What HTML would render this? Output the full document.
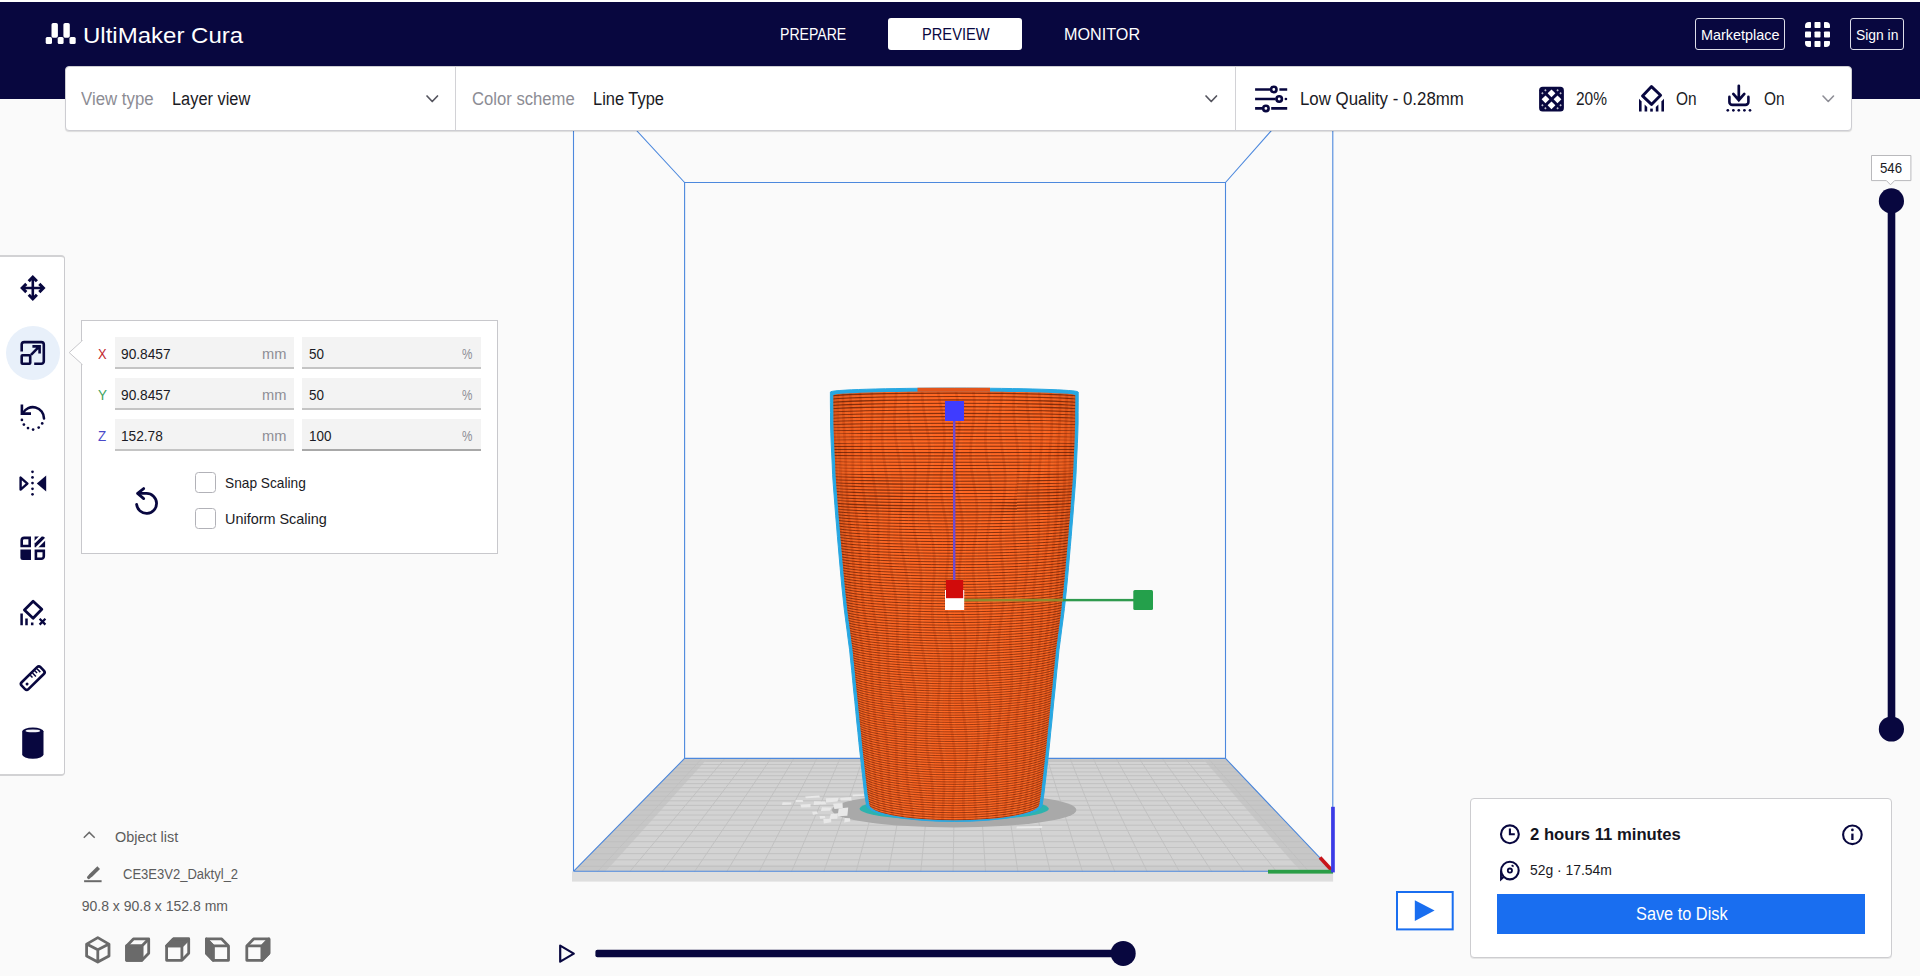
<!DOCTYPE html>
<html><head><meta charset="utf-8"><title>UltiMaker Cura</title>
<style>
*{box-sizing:border-box;margin:0;padding:0}
html,body{width:1920px;height:976px;overflow:hidden;background:#FAFAFA;font-family:"Liberation Sans",sans-serif;color:#1A1A24}
.abs{position:absolute}
.t{position:absolute;white-space:nowrap;line-height:1;transform-origin:0 0}
svg{position:absolute;overflow:visible}
</style></head><body>
<svg style="left:0;top:0" width="1920" height="976" viewBox="0 0 1920 976">
<rect x="572" y="871.3" width="761.1" height="10.3" fill="#DEDEDE"/>
<polygon points="684.6,758.4 1225.5,758.4 1332.8,871.3 573.5,871.3" fill="#D3D3D3"/>
<polygon points="573.5,871.3 605.8,871.3 707.6,758.4 684.6,758.4" fill="#C7C7C7"/>
<polygon points="1300.5,871.3 1332.8,871.3 1225.5,758.4 1202.5,758.4" fill="#C7C7C7"/>
<polygon points="704.5,761.9 1205.5,761.9 1202.5,758.4 707.6,758.4" fill="#C7C7C7"/>
<polygon points="605.8,871.3 1300.5,871.3 1294.7,864.7 611.8,864.7" fill="#CDCDCD"/>
<path d="M597.7,871.3L701.9,758.4M578.4,866.3L1328.1,866.3M630.0,871.3L724.9,758.4M584.8,859.8L1321.9,859.8M662.4,871.3L747.9,758.4M590.9,853.6L1316.0,853.6M694.7,871.3L770.9,758.4M596.9,847.5L1310.2,847.5M727.0,871.3L793.9,758.4M602.6,841.7L1304.7,841.7M759.3,871.3L816.9,758.4M608.2,836.0L1299.3,836.0M791.6,871.3L840.0,758.4M613.6,830.5L1294.0,830.5M823.9,871.3L863.0,758.4M618.9,825.2L1289.0,825.2M856.2,871.3L886.0,758.4M624.0,820.0L1284.0,820.0M888.5,871.3L909.0,758.4M628.9,815.0L1279.3,815.0M920.8,871.3L932.0,758.4M633.7,810.1L1274.6,810.1M953.1,871.3L955.0,758.4M638.4,805.4L1270.1,805.4M985.5,871.3L978.1,758.4M642.9,800.8L1265.8,800.8M1017.8,871.3L1001.1,758.4M647.3,796.3L1261.5,796.3M1050.1,871.3L1024.1,758.4M651.6,791.9L1257.4,791.9M1082.4,871.3L1047.1,758.4M655.8,787.7L1253.3,787.7M1114.7,871.3L1070.1,758.4M659.8,783.6L1249.4,783.6M1147.0,871.3L1093.2,758.4M663.8,779.6L1245.6,779.6M1179.3,871.3L1116.2,758.4M667.6,775.7L1241.9,775.7M1211.6,871.3L1139.2,758.4M671.4,771.9L1238.3,771.9M1243.9,871.3L1162.2,758.4M675.0,768.1L1234.8,768.1M1276.3,871.3L1185.2,758.4M678.6,764.5L1231.3,764.5M1308.6,871.3L1208.2,758.4M682.1,761.0L1228.0,761.0" stroke="#BFBFBF" stroke-width="0.9" fill="none"/>
<ellipse cx="954.2" cy="810" rx="122.2" ry="17.4" fill="#A9A9A9"/>
<g fill="#E8E8E8"><polygon points="782.6,802.2 791.3,802.4 791.1,804.4 782.1,805.0"/><polygon points="795.6,800.1 802.6,800.1 803.3,802.1 795.7,802.0"/><polygon points="805.3,796.4 819.2,795.6 820.0,797.5 805.7,798.3"/><polygon points="800.3,804.5 810.6,804.1 810.4,807.2 801.3,807.5"/><polygon points="814.1,801.3 825.1,801.5 826.4,804.2 813.6,804.9"/><polygon points="825.9,798.3 838.6,797.8 837.5,801.6 826.1,802.4"/><polygon points="822.0,807.3 831.5,807.4 830.3,810.8 820.8,811.0"/><polygon points="833.1,803.7 842.5,802.9 842.8,808.3 834.4,809.1"/><polygon points="838.7,808.5 848.2,807.6 847.4,815.7 837.6,816.2"/><polygon points="830.8,814.0 838.1,813.2 837.3,818.7 829.5,819.0"/><polygon points="823.3,819.1 831.1,818.7 831.3,822.2 823.8,823.4"/><polygon points="840.2,797.9 851.1,797.1 851.6,800.4 840.6,800.4"/><polygon points="852.7,794.5 871.9,793.9 870.4,795.6 852.5,796.4"/><polygon points="812.2,811.8 817.0,811.6 817.7,814.1 812.9,814.7"/><polygon points="819.5,816.1 824.9,815.9 825.3,818.3 820.2,818.8"/><polygon points="1016.8,826.5 1042.2,826.0 1042.1,828.0 1016.4,828.6"/><polygon points="844.7,818.1 850.0,818.3 850.2,821.4 844.1,822.4"/></g>
<path d="M684.6,758.4L684.6,182.5L1225.5,182.5L1225.5,758.4ZM573.5,871.3L573.5,100 M1332.8,871.3L1332.8,100 M573.5,871.3L1332.8,871.3M684.6,758.4L573.5,871.3 M1225.5,758.4L1332.8,871.3M684.6,182.5L618.0,110.4 M1225.5,182.5L1289.3,110.4" stroke="#4C88DD" stroke-width="1.1" fill="none"/>
<ellipse cx="954.2" cy="808.8" rx="94.6" ry="11.6" fill="#2DB3AE"/>
<path d="M830.4,392.0L830.4,402.3L830.5,412.6L830.5,422.9L830.8,433.2L831.2,443.6L831.7,453.9L832.2,464.2L832.6,474.5L833.3,484.8L834.1,495.1L834.9,505.4L835.7,515.8L836.6,526.1L837.4,536.4L838.3,546.7L839.2,557.0L840.1,567.3L841.0,577.6L842.0,587.9L843.1,598.2L844.2,608.6L845.5,618.9L846.9,629.2L848.2,639.5L849.6,649.8L850.6,660.1L851.7,670.4L852.7,680.8L853.7,691.1L854.8,701.4L855.8,711.7L856.8,722.0L857.9,732.3L858.9,742.6L860.0,752.9L861.2,763.2L862.3,773.6L863.5,783.9L864.7,794.2L866.4,804.5A87.9,17.0 0 0 0 1042.2,804.5L1043.9,794.2L1045.1,783.9L1046.3,773.6L1047.4,763.2L1048.6,752.9L1049.7,742.6L1050.7,732.3L1051.8,722.0L1052.8,711.7L1053.8,701.4L1054.9,691.1L1055.9,680.8L1056.9,670.4L1058.0,660.1L1059.0,649.8L1060.4,639.5L1061.7,629.2L1063.1,618.9L1064.4,608.6L1065.5,598.2L1066.6,587.9L1067.6,577.6L1068.5,567.3L1069.4,557.0L1070.3,546.7L1071.2,536.4L1072.0,526.1L1072.9,515.8L1073.7,505.4L1074.5,495.1L1075.3,484.8L1076.0,474.5L1076.4,464.2L1076.9,453.9L1077.4,443.6L1077.8,433.2L1078.1,422.9L1078.1,412.6L1078.2,402.3L1078.2,392.0L1078.2,392.0A123.9,3.9 0 0 0 830.4,392.0Z" fill="#28A7E1" stroke="#28A7E1" stroke-width="1" stroke-linejoin="round"/>
<clipPath id="cupc"><path d="M833.4,395.3L833.4,402.3L833.5,412.6L833.5,422.9L833.8,433.2L834.2,443.6L834.7,453.9L835.2,464.2L835.6,474.5L836.3,484.8L837.1,495.1L837.9,505.4L838.7,515.8L839.6,526.1L840.4,536.4L841.3,546.7L842.2,557.0L843.1,567.3L844.0,577.6L845.0,587.9L846.1,598.2L847.2,608.6L848.5,618.9L849.9,629.2L851.2,639.5L852.6,649.8L853.6,660.1L854.7,670.4L855.7,680.8L856.7,691.1L857.8,701.4L858.8,711.7L859.8,722.0L860.9,732.3L861.9,742.6L863.0,752.9L864.2,763.2L865.3,773.6L866.5,783.9L867.7,794.2L869.4,804.5A84.9,15.8 0 0 0 1039.2,804.5L1040.9,794.2L1042.1,783.9L1043.3,773.6L1044.4,763.2L1045.6,752.9L1046.7,742.6L1047.7,732.3L1048.8,722.0L1049.8,711.7L1050.8,701.4L1051.9,691.1L1052.9,680.8L1053.9,670.4L1055.0,660.1L1056.0,649.8L1057.4,639.5L1058.7,629.2L1060.1,618.9L1061.4,608.6L1062.5,598.2L1063.6,587.9L1064.6,577.6L1065.5,567.3L1066.4,557.0L1067.3,546.7L1068.2,536.4L1069.0,526.1L1069.9,515.8L1070.7,505.4L1071.5,495.1L1072.3,484.8L1073.0,474.5L1073.4,464.2L1073.9,453.9L1074.4,443.6L1074.8,433.2L1075.1,422.9L1075.1,412.6L1075.2,402.3L1075.2,392.0L1075.2,395.3A120.9,3.9 0 0 0 833.4,395.3Z"/></clipPath>
<g clip-path="url(#cupc)">
<rect x="820" y="380" width="270" height="450" fill="#FE6622"/>
<path d="M833.2,386L832.8,393L832.8,400L832.9,407L832.9,414L833.0,421L833.1,428L833.3,435L833.6,442L833.9,449L834.2,456L834.6,463L834.9,470L835.2,477L835.7,484L836.3,491L836.8,498L837.4,505L837.9,512L838.5,519L839.0,526L839.6,533L840.2,540L840.8,547L841.4,554L842.0,561L842.6,568L843.2,575L843.9,582L844.6,589L845.3,596L846.0,603L846.8,610L847.7,617L848.6,624L849.6,631L850.5,638L851.4,645L852.2,652L852.9,659L853.6,666L854.3,673L855.0,680L855.8,687L856.5,694L857.2,701L857.9,708L858.6,715L859.3,722L860.0,729L860.7,736L861.4,743L862.1,750L862.9,757L863.7,764L864.4,771L865.2,778L866.0,785L866.8,792L867.8,799L869.1,806L870.1,813L871.2,820L872.2,827L872.7,834M832.8,386L832.4,393L832.5,400L832.5,407L832.6,414L832.6,421L832.7,428L833.0,435L833.3,442L833.6,449L833.9,456L834.2,463L834.5,470L834.8,477L835.4,484L835.9,491L836.5,498L837.0,505L837.6,512L838.1,519L838.7,526L839.3,533L839.9,540L840.4,547L841.0,554L841.6,561L842.2,568L842.8,575L843.5,582L844.3,589L845.0,596L845.7,603L846.4,610L847.3,617L848.3,624L849.2,631L850.1,638L851.1,645L851.9,652L852.6,659L853.3,666L854.0,673L854.7,680L855.4,687L856.2,694L856.9,701L857.6,708L858.3,715L858.9,722L859.6,729L860.3,736L861.0,743L861.8,750L862.6,757L863.3,764L864.1,771L864.9,778L865.7,785L866.5,792L867.5,799L868.8,806L869.8,813L870.9,820L871.9,827L872.4,834M834.5,386L834.1,393L834.1,400L834.2,407L834.2,414L834.3,421L834.3,428L834.6,435L834.9,442L835.3,449L835.6,456L836.0,463L836.3,470L836.6,477L837.1,484L837.7,491L838.2,498L838.7,505L839.3,512L839.8,519L840.3,526L840.9,533L841.5,540L842.1,547L842.7,554L843.3,561L844.0,568L844.6,575L845.3,582L846.0,589L846.7,596L847.4,603L848.1,610L849.0,617L849.9,624L850.8,631L851.7,638L852.6,645L853.5,652L854.2,659L854.9,666L855.6,673L856.4,680L857.1,687L857.8,694L858.5,701L859.2,708L859.9,715L860.5,722L861.2,729L861.9,736L862.5,743L863.2,750L864.0,757L864.8,764L865.6,771L866.4,778L867.2,785L868.0,792L869.0,799L870.3,806L871.4,813L872.4,820L873.4,827L873.8,834M838.0,386L837.6,393L837.6,400L837.6,407L837.7,414L837.8,421L838.0,428L838.4,435L838.8,442L839.2,449L839.6,456L839.9,463L840.2,470L840.5,477L840.9,484L841.4,491L841.8,498L842.3,505L842.8,512L843.3,519L843.9,526L844.5,533L845.2,540L845.8,547L846.5,554L847.2,561L847.8,568L848.4,575L849.1,582L849.7,589L850.4,596L851.0,603L851.6,610L852.4,617L853.3,624L854.2,631L855.1,638L856.1,645L857.0,652L857.7,659L858.5,666L859.3,673L860.0,680L860.7,687L861.4,694L862.0,701L862.6,708L863.2,715L863.8,722L864.4,729L865.1,736L865.7,743L866.5,750L867.3,757L868.1,764L869.0,771L869.8,778L870.6,785L871.4,792L872.3,799L873.6,806L874.5,813L875.5,820L876.4,827L876.8,834M843.2,386L842.8,393L842.9,400L843.1,407L843.4,414L843.6,421L843.9,428L844.4,435L844.8,442L845.2,449L845.5,456L845.7,463L845.8,470L846.0,477L846.3,484L846.7,491L847.1,498L847.7,505L848.2,512L848.9,519L849.6,526L850.3,533L851.1,540L851.8,547L852.5,554L853.1,561L853.6,568L854.1,575L854.6,582L855.1,589L855.6,596L856.2,603L856.8,610L857.6,617L858.6,624L859.6,631L860.6,638L861.7,645L862.6,652L863.4,659L864.1,666L864.8,673L865.4,680L865.9,687L866.5,694L867.0,701L867.5,708L868.0,715L868.6,722L869.3,729L870.0,736L870.8,743L871.7,750L872.6,757L873.4,764L874.3,771L875.0,778L875.8,785L876.4,792L877.2,799L878.2,806L879.1,813L879.9,820L880.8,827L881.2,834M850.3,386L850.2,393L850.5,400L850.9,407L851.4,414L851.7,421L852.0,428L852.3,435L852.6,442L852.7,449L852.8,456L852.8,463L852.8,470L852.9,477L853.3,484L853.8,491L854.4,498L855.2,505L856.0,512L856.8,519L857.6,526L858.4,533L859.1,540L859.6,547L860.1,554L860.4,561L860.7,568L861.0,575L861.4,582L861.9,589L862.4,596L863.1,603L863.9,610L865.0,617L866.1,624L867.2,631L868.3,638L869.3,645L870.1,652L870.7,659L871.2,666L871.6,673L872.0,680L872.4,687L872.8,694L873.3,701L873.9,708L874.6,715L875.3,722L876.2,729L877.1,736L877.9,743L878.8,750L879.6,757L880.4,764L881.0,771L881.6,778L882.1,785L882.5,792L883.1,799L884.1,806L884.9,813L885.8,820L886.7,827L887.3,834M859.7,386L859.9,393L860.5,400L861.0,407L861.3,414L861.4,421L861.4,428L861.4,435L861.3,442L861.2,449L861.2,456L861.2,463L861.4,470L861.7,477L862.4,484L863.2,491L864.2,498L865.1,505L866.0,512L866.8,519L867.5,526L868.0,533L868.3,540L868.5,547L868.6,554L868.8,561L868.9,568L869.2,575L869.8,582L870.5,589L871.3,596L872.3,603L873.3,610L874.5,617L875.6,624L876.6,631L877.5,638L878.2,645L878.6,652L878.9,659L879.1,666L879.4,673L879.7,680L880.1,687L880.7,694L881.4,701L882.2,708L883.2,715L884.1,722L885.1,729L885.9,736L886.7,743L887.3,750L887.8,757L888.3,764L888.6,771L888.9,778L889.2,785L889.7,792L890.3,799L891.3,806L892.3,813L893.4,820L894.5,827L895.2,834M871.4,386L871.7,393L872.0,400L872.2,407L872.0,414L871.8,421L871.4,428L871.1,435L870.9,442L870.9,449L871.1,456L871.6,463L872.2,470L873.0,477L874.0,484L875.1,491L876.1,498L876.9,505L877.5,512L877.9,519L878.0,526L878.1,533L878.0,540L878.0,547L878.1,554L878.3,561L878.8,568L879.4,575L880.3,582L881.4,589L882.5,596L883.7,603L884.7,610L885.6,617L886.4,624L886.9,631L887.3,638L887.6,645L887.7,652L887.8,659L888.0,666L888.4,673L888.9,680L889.7,687L890.6,694L891.6,701L892.6,708L893.6,715L894.5,722L895.2,729L895.8,736L896.1,743L896.3,750L896.5,757L896.6,764L896.8,771L897.1,778L897.6,785L898.2,792L899.2,799L900.4,806L901.6,813L902.8,820L903.9,827L904.5,834M884.3,386L884.1,393L883.9,400L883.5,407L883.0,414L882.5,421L882.1,428L882.0,435L882.3,442L882.8,449L883.5,456L884.5,463L885.5,470L886.6,477L887.6,484L888.4,491L888.9,498L889.2,505L889.2,512L889.0,519L888.8,526L888.6,533L888.6,540L888.8,547L889.3,554L890.0,561L890.9,568L892.0,575L893.2,582L894.4,589L895.4,596L896.2,603L896.7,610L897.1,617L897.3,624L897.3,631L897.3,638L897.4,645L897.6,652L897.9,659L898.5,666L899.3,673L900.3,680L901.4,687L902.5,694L903.5,701L904.4,708L905.0,715L905.5,722L905.6,729L905.7,736L905.6,743L905.5,750L905.6,757L905.8,764L906.2,771L906.9,778L907.7,785L908.7,792L909.9,799L911.2,806L912.3,813L913.2,820L913.9,827L914.1,834M897.0,386L896.2,393L895.6,400L895.0,407L894.6,414L894.4,421L894.6,428L895.2,435L896.1,442L897.2,449L898.4,456L899.5,463L900.4,470L901.1,477L901.5,484L901.6,491L901.4,498L901.1,505L900.7,512L900.4,519L900.3,526L900.5,533L901.0,540L901.8,547L902.8,554L904.0,561L905.3,568L906.4,575L907.4,582L908.1,589L908.5,596L908.5,603L908.4,610L908.2,617L908.0,624L908.0,631L908.1,638L908.5,645L909.2,652L910.1,659L911.1,666L912.3,673L913.4,680L914.5,687L915.3,694L915.9,701L916.1,708L916.1,715L916.0,722L915.7,729L915.5,736L915.4,743L915.5,750L915.9,757L916.6,764L917.5,771L918.5,778L919.6,785L920.7,792L921.7,799L922.6,806L923.1,813L923.5,820L923.6,827L923.3,834M909.2,386L908.4,393L908.0,400L907.9,407L908.2,414L908.8,421L909.7,428L911.0,435L912.2,442L913.4,449L914.3,456L914.9,463L915.1,470L915.0,477L914.6,484L914.1,491L913.6,498L913.2,505L913.0,512L913.2,519L913.7,526L914.6,533L915.8,540L917.1,547L918.3,554L919.5,561L920.3,568L920.9,575L921.1,582L921.0,589L920.7,596L920.2,603L919.8,610L919.6,617L919.7,624L920.1,631L920.8,638L921.8,645L922.9,652L924.1,659L925.3,666L926.3,673L927.0,680L927.5,687L927.6,694L927.4,701L927.1,708L926.6,715L926.3,722L926.1,729L926.2,736L926.6,743L927.2,750L928.2,757L929.2,764L930.3,771L931.4,778L932.2,785L932.8,792L933.2,799L933.3,806L933.2,813L933.0,820L932.7,827L932.4,834M922.2,386L922.1,393L922.5,400L923.3,407L924.3,414L925.6,421L926.8,428L928.0,435L928.9,442L929.4,449L929.5,456L929.2,463L928.6,470L927.9,477L927.2,484L926.8,491L926.6,498L926.8,505L927.4,512L928.4,519L929.6,526L930.9,533L932.2,540L933.3,547L934.0,554L934.4,561L934.5,568L934.1,575L933.6,582L933.0,589L932.5,596L932.2,603L932.1,610L932.5,617L933.2,624L934.2,631L935.4,638L936.7,645L937.8,652L938.8,659L939.4,666L939.6,673L939.6,680L939.2,687L938.7,694L938.2,701L937.7,708L937.5,715L937.6,722L937.9,729L938.6,736L939.5,743L940.6,750L941.7,757L942.6,764L943.4,771L943.8,778L944.0,785L943.9,792L943.5,799L943.1,806L942.7,813L942.4,820L942.3,827L942.4,834M937.4,386L938.3,393L939.4,400L940.8,407L942.0,414L943.1,421L943.9,428L944.3,435L944.2,442L943.8,449L943.1,456L942.3,463L941.5,470L941.0,477L940.9,484L941.1,491L941.8,498L942.8,505L944.0,512L945.3,519L946.6,526L947.6,533L948.2,540L948.4,547L948.3,554L947.8,561L947.1,568L946.4,575L945.8,582L945.4,589L945.3,596L945.7,603L946.4,610L947.4,617L948.6,624L949.8,631L950.8,638L951.6,645L952.1,652L952.2,659L952.0,666L951.5,673L950.8,680L950.1,687L949.6,694L949.4,701L949.4,708L949.8,715L950.5,722L951.4,729L952.5,736L953.5,743L954.3,750L954.9,757L955.2,764L955.2,771L954.9,778L954.4,785L953.8,792L953.2,799L952.8,806L952.6,813L952.7,820L953.1,827L953.8,834M954.8,386L956.2,393L957.4,400L958.4,407L959.1,414L959.4,421L959.2,428L958.6,435L957.8,442L957.0,449L956.2,456L955.7,463L955.6,470L955.9,477L956.6,484L957.6,491L958.9,498L960.1,505L961.3,512L962.1,519L962.6,526L962.7,533L962.3,540L961.7,547L960.9,554L960.1,561L959.4,568L959.0,575L959.0,582L959.4,589L960.1,596L961.1,603L962.2,610L963.3,617L964.2,624L964.8,631L965.1,638L965.0,645L964.5,652L963.9,659L963.1,666L962.4,673L961.8,680L961.5,687L961.6,694L962.0,701L962.7,708L963.6,715L964.5,722L965.5,729L966.2,736L966.7,743L966.8,750L966.6,757L966.1,764L965.4,771L964.7,778L964.1,785L963.6,792L963.4,799L963.4,806L963.8,813L964.3,820L965.1,827L965.9,834M972.7,386L973.6,393L974.2,400L974.3,407L974.0,414L973.4,421L972.6,428L971.7,435L971.0,442L970.6,449L970.5,456L970.9,463L971.6,470L972.7,477L973.8,484L975.0,491L976.0,498L976.7,505L977.0,512L976.9,519L976.4,526L975.7,533L974.8,540L973.9,547L973.3,554L972.9,561L972.9,568L973.3,575L974.0,582L974.9,589L975.9,596L976.9,603L977.7,610L978.1,617L978.2,624L977.9,631L977.2,638L976.4,645L975.5,652L974.8,659L974.2,666L973.9,673L973.9,680L974.3,687L975.0,694L975.8,701L976.7,708L977.5,715L978.0,722L978.3,729L978.3,736L977.9,743L977.3,750L976.5,757L975.7,764L975.0,771L974.5,778L974.3,785L974.4,792L974.7,799L975.1,806L975.7,813L976.3,820L976.8,827L977.3,834M988.8,386L988.9,393L988.6,400L987.9,407L987.1,414L986.3,421L985.7,428L985.4,435L985.4,442L985.8,449L986.5,456L987.5,463L988.7,470L989.8,477L990.6,484L991.1,491L991.2,498L990.9,505L990.4,512L989.5,519L988.6,526L987.8,533L987.1,540L986.7,547L986.8,554L987.1,561L987.8,568L988.7,575L989.6,582L990.4,589L991.0,596L991.3,603L991.2,610L990.7,617L989.9,624L989.0,631L988.0,638L987.1,645L986.5,652L986.2,659L986.3,666L986.6,673L987.2,680L987.9,687L988.7,694L989.3,701L989.7,708L989.8,715L989.6,722L989.1,729L988.4,736L987.5,743L986.7,750L986.0,757L985.5,764L985.2,771L985.2,778L985.5,785L986.0,792L986.5,799L986.9,806L987.2,813L987.2,820L987.1,827L986.8,834M1002.4,386L1002.0,393L1001.2,400L1000.5,407L1000.0,414L999.8,421L999.9,428L1000.4,435L1001.1,442L1002.0,449L1003.0,456L1004.0,463L1004.7,470L1005.1,477L1005.0,484L1004.6,491L1004.0,498L1003.1,505L1002.2,512L1001.3,519L1000.7,526L1000.4,533L1000.4,540L1000.8,547L1001.4,554L1002.1,561L1002.9,568L1003.6,575L1003.9,582L1004.0,589L1003.8,596L1003.2,603L1002.4,610L1001.4,617L1000.4,624L999.5,631L998.8,638L998.4,645L998.4,652L998.7,659L999.2,666L999.7,673L1000.3,680L1000.7,687L1000.9,694L1000.9,701L1000.5,708L999.9,715L999.1,722L998.3,729L997.4,736L996.7,743L996.2,750L995.9,757L995.9,764L996.2,771L996.5,778L996.9,785L997.3,792L997.4,799L997.2,806L996.8,813L996.2,820L995.4,827L994.7,834M1014.5,386L1014.1,393L1013.7,400L1013.6,407L1013.8,414L1014.3,421L1015.1,428L1015.9,435L1016.8,442L1017.5,449L1018.0,456L1018.2,463L1018.2,470L1017.8,477L1017.1,484L1016.2,491L1015.3,498L1014.5,505L1013.9,512L1013.6,519L1013.7,526L1014.0,533L1014.4,540L1015.0,547L1015.6,554L1016.1,561L1016.3,568L1016.2,575L1015.9,582L1015.2,589L1014.3,596L1013.4,603L1012.5,610L1011.6,617L1010.9,624L1010.5,631L1010.3,638L1010.4,645L1010.7,652L1011.1,659L1011.5,666L1011.7,673L1011.7,680L1011.5,687L1011.0,694L1010.3,701L1009.5,708L1008.6,715L1007.8,722L1007.1,729L1006.6,736L1006.3,743L1006.3,750L1006.4,757L1006.6,764L1006.9,771L1007.0,778L1007.1,785L1006.9,792L1006.4,799L1005.5,806L1004.6,813L1003.6,820L1002.6,827L1001.9,834M1026.4,386L1026.6,393L1026.8,400L1027.3,407L1028.0,414L1028.8,421L1029.6,428L1030.1,435L1030.5,442L1030.5,449L1030.4,456L1029.9,463L1029.3,470L1028.6,477L1027.8,484L1027.0,491L1026.5,498L1026.2,505L1026.2,512L1026.4,519L1026.8,526L1027.2,533L1027.6,540L1027.8,547L1027.9,554L1027.6,561L1027.2,568L1026.5,575L1025.7,582L1024.7,589L1023.8,596L1023.1,603L1022.5,610L1022.1,617L1021.8,624L1021.8,631L1021.8,638L1021.9,645L1022.0,652L1022.0,659L1021.8,666L1021.5,673L1020.9,680L1020.1,687L1019.3,694L1018.4,701L1017.6,708L1016.9,715L1016.4,722L1016.1,729L1016.0,736L1016.1,743L1016.2,750L1016.3,757L1016.2,764L1016.1,771L1015.8,778L1015.2,785L1014.5,792L1013.6,799L1012.4,806L1011.3,813L1010.3,820L1009.5,827L1009.2,834M1038.5,386L1039.2,393L1039.8,400L1040.4,407L1041.0,414L1041.5,421L1041.9,428L1041.8,435L1041.6,442L1041.1,449L1040.5,456L1039.9,463L1039.3,470L1038.8,477L1038.3,484L1038.0,491L1037.9,498L1038.0,505L1038.2,512L1038.5,519L1038.6,526L1038.7,533L1038.5,540L1038.2,547L1037.6,554L1037.0,561L1036.2,568L1035.3,575L1034.5,582L1033.8,589L1033.2,596L1032.9,603L1032.7,610L1032.5,617L1032.3,624L1032.2,631L1032.0,638L1031.7,645L1031.2,652L1030.7,659L1030.1,666L1029.3,673L1028.4,680L1027.6,687L1026.8,694L1026.1,701L1025.6,708L1025.3,715L1025.1,722L1025.0,729L1025.0,736L1024.9,743L1024.8,750L1024.5,757L1024.0,764L1023.4,771L1022.6,778L1021.7,785L1020.9,792L1019.9,799L1018.7,806L1017.8,813L1017.1,820L1016.5,827L1016.4,834M1049.9,386L1050.7,393L1051.1,400L1051.5,407L1051.7,414L1051.7,421L1051.6,428L1051.2,435L1050.6,442L1050.0,449L1049.5,456L1049.1,463L1048.8,470L1048.7,477L1048.6,484L1048.5,491L1048.5,498L1048.6,505L1048.6,512L1048.4,519L1048.2,526L1047.7,533L1047.1,540L1046.4,547L1045.7,554L1044.9,561L1044.2,568L1043.6,575L1043.0,582L1042.6,589L1042.3,596L1042.1,603L1041.9,610L1041.6,617L1041.2,624L1040.7,631L1040.0,638L1039.3,645L1038.4,652L1037.7,659L1036.8,666L1036.0,673L1035.3,680L1034.6,687L1034.1,694L1033.7,701L1033.4,708L1033.1,715L1032.9,722L1032.7,729L1032.4,736L1032.0,743L1031.5,750L1030.8,757L1030.0,764L1029.1,771L1028.3,778L1027.4,785L1026.6,792L1025.8,799L1024.8,806L1024.1,813L1023.5,820L1022.9,827L1022.8,834M1059.4,386L1059.9,393L1060.0,400L1060.0,407L1059.9,414L1059.7,421L1059.4,428L1059.0,435L1058.5,442L1058.1,449L1057.9,456L1057.7,463L1057.7,470L1057.7,477L1057.6,484L1057.4,491L1057.2,498L1056.9,505L1056.5,512L1056.1,519L1055.5,526L1054.8,533L1054.1,540L1053.4,547L1052.7,554L1052.1,561L1051.6,568L1051.2,575L1050.9,582L1050.5,589L1050.2,596L1049.8,603L1049.4,610L1048.7,617L1048.0,624L1047.1,631L1046.2,638L1045.2,645L1044.3,652L1043.5,659L1042.8,666L1042.2,673L1041.6,680L1041.1,687L1040.7,694L1040.3,701L1040.0,708L1039.6,715L1039.1,722L1038.6,729L1038.0,736L1037.4,743L1036.6,750L1035.8,757L1034.9,764L1034.1,771L1033.3,778L1032.6,785L1031.9,792L1031.2,799L1030.3,806L1029.5,813L1028.8,820L1028.1,827L1027.8,834M1066.4,386L1066.8,393L1066.7,400L1066.5,407L1066.3,414L1066.1,421L1066.0,428L1065.7,435L1065.4,442L1065.2,449L1065.1,456L1065.0,463L1064.9,470L1064.8,477L1064.5,484L1064.1,491L1063.6,498L1063.1,505L1062.5,512L1061.9,519L1061.2,526L1060.6,533L1060.0,540L1059.4,547L1058.9,554L1058.4,561L1058.0,568L1057.6,575L1057.2,582L1056.7,589L1056.1,596L1055.5,603L1054.9,610L1054.0,617L1053.0,624L1052.1,631L1051.1,638L1050.1,645L1049.3,652L1048.6,659L1048.0,666L1047.5,673L1046.9,680L1046.4,687L1045.9,694L1045.4,701L1044.9,708L1044.3,715L1043.6,722L1042.9,729L1042.2,736L1041.5,743L1040.7,750L1039.9,757L1039.1,764L1038.4,771L1037.7,778L1037.0,785L1036.4,792L1035.7,799L1034.5,806L1033.7,813L1032.8,820L1031.8,827L1031.4,834M1071.3,386L1071.7,393L1071.6,400L1071.4,407L1071.3,414L1071.3,421L1071.2,428L1071.0,435L1070.8,442L1070.6,449L1070.4,456L1070.2,463L1069.9,470L1069.7,477L1069.2,484L1068.7,491L1068.1,498L1067.5,505L1066.9,512L1066.3,519L1065.8,526L1065.2,533L1064.6,540L1064.1,547L1063.6,554L1063.1,561L1062.6,568L1062.1,575L1061.5,582L1060.9,589L1060.2,596L1059.5,603L1058.7,610L1057.8,617L1056.8,624L1055.9,631L1054.9,638L1054.0,645L1053.3,652L1052.6,659L1052.0,666L1051.4,673L1050.8,680L1050.2,687L1049.5,694L1048.9,701L1048.2,708L1047.5,715L1046.8,722L1046.1,729L1045.3,736L1044.6,743L1043.9,750L1043.2,757L1042.4,764L1041.7,771L1041.0,778L1040.3,785L1039.6,792L1038.7,799L1037.5,806L1036.4,813L1035.4,820L1034.4,827L1033.9,834M1074.5,386L1074.9,393L1074.8,400L1074.8,407L1074.7,414L1074.7,421L1074.6,428L1074.4,435L1074.1,442L1073.8,449L1073.6,456L1073.3,463L1073.0,470L1072.6,477L1072.1,484L1071.6,491L1071.0,498L1070.4,505L1069.9,512L1069.3,519L1068.8,526L1068.2,533L1067.7,540L1067.1,547L1066.5,554L1066.0,561L1065.4,568L1064.8,575L1064.1,582L1063.4,589L1062.7,596L1061.9,603L1061.2,610L1060.3,617L1059.3,624L1058.4,631L1057.5,638L1056.6,645L1055.8,652L1055.1,659L1054.4,666L1053.8,673L1053.1,680L1052.4,687L1051.7,694L1051.0,701L1050.3,708L1049.6,715L1048.9,722L1048.2,729L1047.5,736L1046.8,743L1046.1,750L1045.3,757L1044.5,764L1043.8,771L1043.0,778L1042.2,785L1041.4,792L1040.5,799L1039.2,806L1038.1,813L1037.1,820L1036.0,827L1035.6,834M1075.9,386L1076.3,393L1076.2,400L1076.2,407L1076.1,414L1076.0,421L1076.0,428L1075.7,435L1075.4,442L1075.1,449L1074.8,456L1074.5,463L1074.2,470L1073.8,477L1073.3,484L1072.8,491L1072.2,498L1071.7,505L1071.1,512L1070.6,519L1070.0,526L1069.4,533L1068.8,540L1068.2,547L1067.6,554L1067.0,561L1066.4,568L1065.8,575L1065.2,582L1064.4,589L1063.7,596L1063.0,603L1062.3,610L1061.3,617L1060.4,624L1059.5,631L1058.5,638L1057.6,645L1056.8,652L1056.1,659L1055.4,666L1054.7,673L1053.9,680L1053.2,687L1052.5,694L1051.8,701L1051.1,708L1050.4,715L1049.7,722L1049.0,729L1048.3,736L1047.7,743L1046.9,750L1046.1,757L1045.3,764L1044.5,771L1043.7,778L1042.9,785L1042.2,792L1041.2,799L1039.9,806L1038.8,813L1037.8,820L1036.7,827L1036.3,834M1075.2,386L1075.6,393L1075.5,400L1075.5,407L1075.5,414L1075.4,421L1075.4,428L1075.1,435L1074.8,442L1074.5,449L1074.1,456L1073.8,463L1073.5,470L1073.2,477L1072.7,484L1072.1,491L1071.6,498L1071.1,505L1070.5,512L1070.0,519L1069.5,526L1068.9,533L1068.3,540L1067.7,547L1067.1,554L1066.5,561L1065.9,568L1065.3,575L1064.6,582L1063.9,589L1063.2,596L1062.5,603L1061.7,610L1060.8,617L1059.9,624L1059.0,631L1058.1,638L1057.2,645L1056.3,652L1055.6,659L1054.9,666L1054.2,673L1053.5,680L1052.8,687L1052.1,694L1051.4,701L1050.7,708L1050.0,715L1049.3,722L1048.6,729L1047.9,736L1047.2,743L1046.5,750L1045.7,757L1045.0,764L1044.2,771L1043.4,778L1042.6,785L1041.8,792L1040.8,799L1039.5,806L1038.5,813L1037.4,820L1036.4,827L1035.9,834" stroke="#8A2604" stroke-opacity="0.15" stroke-width="2.6" fill="none"/>
<path d="M833.2,386L832.8,393L832.8,400L832.9,407L832.9,414L833.0,421L833.1,428L833.3,435L833.6,442L833.9,449L834.2,456L834.6,463L834.9,470L835.2,477L835.7,484L836.3,491L836.8,498L837.4,505L837.9,512L838.5,519L839.0,526L839.6,533L840.2,540L840.8,547L841.4,554L842.0,561L842.6,568L843.2,575L843.9,582L844.6,589L845.3,596L846.0,603L846.8,610L847.7,617L848.6,624L849.6,631L850.5,638L851.4,645L852.2,652L852.9,659L853.6,666L854.3,673L855.0,680L855.8,687L856.5,694L857.2,701L857.9,708L858.6,715L859.3,722L860.0,729L860.7,736L861.4,743L862.1,750L862.9,757L863.7,764L864.4,771L865.2,778L866.0,785L866.8,792L867.8,799L869.1,806L870.1,813L871.2,820L872.2,827L872.7,834M832.8,386L832.4,393L832.5,400L832.5,407L832.6,414L832.6,421L832.7,428L833.0,435L833.3,442L833.6,449L833.9,456L834.2,463L834.5,470L834.8,477L835.4,484L835.9,491L836.5,498L837.0,505L837.6,512L838.1,519L838.7,526L839.3,533L839.9,540L840.4,547L841.0,554L841.6,561L842.2,568L842.8,575L843.5,582L844.3,589L845.0,596L845.7,603L846.4,610L847.3,617L848.3,624L849.2,631L850.1,638L851.1,645L851.9,652L852.6,659L853.3,666L854.0,673L854.7,680L855.4,687L856.2,694L856.9,701L857.6,708L858.3,715L858.9,722L859.6,729L860.3,736L861.0,743L861.8,750L862.6,757L863.3,764L864.1,771L864.9,778L865.7,785L866.5,792L867.5,799L868.8,806L869.8,813L870.9,820L871.9,827L872.4,834M834.5,386L834.1,393L834.1,400L834.2,407L834.2,414L834.3,421L834.3,428L834.6,435L834.9,442L835.3,449L835.6,456L836.0,463L836.3,470L836.6,477L837.1,484L837.7,491L838.2,498L838.7,505L839.3,512L839.8,519L840.3,526L840.9,533L841.5,540L842.1,547L842.7,554L843.3,561L844.0,568L844.6,575L845.3,582L846.0,589L846.7,596L847.4,603L848.1,610L849.0,617L849.9,624L850.8,631L851.7,638L852.6,645L853.5,652L854.2,659L854.9,666L855.6,673L856.4,680L857.1,687L857.8,694L858.5,701L859.2,708L859.9,715L860.5,722L861.2,729L861.9,736L862.5,743L863.2,750L864.0,757L864.8,764L865.6,771L866.4,778L867.2,785L868.0,792L869.0,799L870.3,806L871.4,813L872.4,820L873.4,827L873.8,834M838.0,386L837.6,393L837.6,400L837.6,407L837.7,414L837.8,421L838.0,428L838.4,435L838.8,442L839.2,449L839.6,456L839.9,463L840.2,470L840.5,477L840.9,484L841.4,491L841.8,498L842.3,505L842.8,512L843.3,519L843.9,526L844.5,533L845.2,540L845.8,547L846.5,554L847.2,561L847.8,568L848.4,575L849.1,582L849.7,589L850.4,596L851.0,603L851.6,610L852.4,617L853.3,624L854.2,631L855.1,638L856.1,645L857.0,652L857.7,659L858.5,666L859.3,673L860.0,680L860.7,687L861.4,694L862.0,701L862.6,708L863.2,715L863.8,722L864.4,729L865.1,736L865.7,743L866.5,750L867.3,757L868.1,764L869.0,771L869.8,778L870.6,785L871.4,792L872.3,799L873.6,806L874.5,813L875.5,820L876.4,827L876.8,834M843.2,386L842.8,393L842.9,400L843.1,407L843.4,414L843.6,421L843.9,428L844.4,435L844.8,442L845.2,449L845.5,456L845.7,463L845.8,470L846.0,477L846.3,484L846.7,491L847.1,498L847.7,505L848.2,512L848.9,519L849.6,526L850.3,533L851.1,540L851.8,547L852.5,554L853.1,561L853.6,568L854.1,575L854.6,582L855.1,589L855.6,596L856.2,603L856.8,610L857.6,617L858.6,624L859.6,631L860.6,638L861.7,645L862.6,652L863.4,659L864.1,666L864.8,673L865.4,680L865.9,687L866.5,694L867.0,701L867.5,708L868.0,715L868.6,722L869.3,729L870.0,736L870.8,743L871.7,750L872.6,757L873.4,764L874.3,771L875.0,778L875.8,785L876.4,792L877.2,799L878.2,806L879.1,813L879.9,820L880.8,827L881.2,834M850.3,386L850.2,393L850.5,400L850.9,407L851.4,414L851.7,421L852.0,428L852.3,435L852.6,442L852.7,449L852.8,456L852.8,463L852.8,470L852.9,477L853.3,484L853.8,491L854.4,498L855.2,505L856.0,512L856.8,519L857.6,526L858.4,533L859.1,540L859.6,547L860.1,554L860.4,561L860.7,568L861.0,575L861.4,582L861.9,589L862.4,596L863.1,603L863.9,610L865.0,617L866.1,624L867.2,631L868.3,638L869.3,645L870.1,652L870.7,659L871.2,666L871.6,673L872.0,680L872.4,687L872.8,694L873.3,701L873.9,708L874.6,715L875.3,722L876.2,729L877.1,736L877.9,743L878.8,750L879.6,757L880.4,764L881.0,771L881.6,778L882.1,785L882.5,792L883.1,799L884.1,806L884.9,813L885.8,820L886.7,827L887.3,834M859.7,386L859.9,393L860.5,400L861.0,407L861.3,414L861.4,421L861.4,428L861.4,435L861.3,442L861.2,449L861.2,456L861.2,463L861.4,470L861.7,477L862.4,484L863.2,491L864.2,498L865.1,505L866.0,512L866.8,519L867.5,526L868.0,533L868.3,540L868.5,547L868.6,554L868.8,561L868.9,568L869.2,575L869.8,582L870.5,589L871.3,596L872.3,603L873.3,610L874.5,617L875.6,624L876.6,631L877.5,638L878.2,645L878.6,652L878.9,659L879.1,666L879.4,673L879.7,680L880.1,687L880.7,694L881.4,701L882.2,708L883.2,715L884.1,722L885.1,729L885.9,736L886.7,743L887.3,750L887.8,757L888.3,764L888.6,771L888.9,778L889.2,785L889.7,792L890.3,799L891.3,806L892.3,813L893.4,820L894.5,827L895.2,834M871.4,386L871.7,393L872.0,400L872.2,407L872.0,414L871.8,421L871.4,428L871.1,435L870.9,442L870.9,449L871.1,456L871.6,463L872.2,470L873.0,477L874.0,484L875.1,491L876.1,498L876.9,505L877.5,512L877.9,519L878.0,526L878.1,533L878.0,540L878.0,547L878.1,554L878.3,561L878.8,568L879.4,575L880.3,582L881.4,589L882.5,596L883.7,603L884.7,610L885.6,617L886.4,624L886.9,631L887.3,638L887.6,645L887.7,652L887.8,659L888.0,666L888.4,673L888.9,680L889.7,687L890.6,694L891.6,701L892.6,708L893.6,715L894.5,722L895.2,729L895.8,736L896.1,743L896.3,750L896.5,757L896.6,764L896.8,771L897.1,778L897.6,785L898.2,792L899.2,799L900.4,806L901.6,813L902.8,820L903.9,827L904.5,834M884.3,386L884.1,393L883.9,400L883.5,407L883.0,414L882.5,421L882.1,428L882.0,435L882.3,442L882.8,449L883.5,456L884.5,463L885.5,470L886.6,477L887.6,484L888.4,491L888.9,498L889.2,505L889.2,512L889.0,519L888.8,526L888.6,533L888.6,540L888.8,547L889.3,554L890.0,561L890.9,568L892.0,575L893.2,582L894.4,589L895.4,596L896.2,603L896.7,610L897.1,617L897.3,624L897.3,631L897.3,638L897.4,645L897.6,652L897.9,659L898.5,666L899.3,673L900.3,680L901.4,687L902.5,694L903.5,701L904.4,708L905.0,715L905.5,722L905.6,729L905.7,736L905.6,743L905.5,750L905.6,757L905.8,764L906.2,771L906.9,778L907.7,785L908.7,792L909.9,799L911.2,806L912.3,813L913.2,820L913.9,827L914.1,834M897.0,386L896.2,393L895.6,400L895.0,407L894.6,414L894.4,421L894.6,428L895.2,435L896.1,442L897.2,449L898.4,456L899.5,463L900.4,470L901.1,477L901.5,484L901.6,491L901.4,498L901.1,505L900.7,512L900.4,519L900.3,526L900.5,533L901.0,540L901.8,547L902.8,554L904.0,561L905.3,568L906.4,575L907.4,582L908.1,589L908.5,596L908.5,603L908.4,610L908.2,617L908.0,624L908.0,631L908.1,638L908.5,645L909.2,652L910.1,659L911.1,666L912.3,673L913.4,680L914.5,687L915.3,694L915.9,701L916.1,708L916.1,715L916.0,722L915.7,729L915.5,736L915.4,743L915.5,750L915.9,757L916.6,764L917.5,771L918.5,778L919.6,785L920.7,792L921.7,799L922.6,806L923.1,813L923.5,820L923.6,827L923.3,834M909.2,386L908.4,393L908.0,400L907.9,407L908.2,414L908.8,421L909.7,428L911.0,435L912.2,442L913.4,449L914.3,456L914.9,463L915.1,470L915.0,477L914.6,484L914.1,491L913.6,498L913.2,505L913.0,512L913.2,519L913.7,526L914.6,533L915.8,540L917.1,547L918.3,554L919.5,561L920.3,568L920.9,575L921.1,582L921.0,589L920.7,596L920.2,603L919.8,610L919.6,617L919.7,624L920.1,631L920.8,638L921.8,645L922.9,652L924.1,659L925.3,666L926.3,673L927.0,680L927.5,687L927.6,694L927.4,701L927.1,708L926.6,715L926.3,722L926.1,729L926.2,736L926.6,743L927.2,750L928.2,757L929.2,764L930.3,771L931.4,778L932.2,785L932.8,792L933.2,799L933.3,806L933.2,813L933.0,820L932.7,827L932.4,834M922.2,386L922.1,393L922.5,400L923.3,407L924.3,414L925.6,421L926.8,428L928.0,435L928.9,442L929.4,449L929.5,456L929.2,463L928.6,470L927.9,477L927.2,484L926.8,491L926.6,498L926.8,505L927.4,512L928.4,519L929.6,526L930.9,533L932.2,540L933.3,547L934.0,554L934.4,561L934.5,568L934.1,575L933.6,582L933.0,589L932.5,596L932.2,603L932.1,610L932.5,617L933.2,624L934.2,631L935.4,638L936.7,645L937.8,652L938.8,659L939.4,666L939.6,673L939.6,680L939.2,687L938.7,694L938.2,701L937.7,708L937.5,715L937.6,722L937.9,729L938.6,736L939.5,743L940.6,750L941.7,757L942.6,764L943.4,771L943.8,778L944.0,785L943.9,792L943.5,799L943.1,806L942.7,813L942.4,820L942.3,827L942.4,834M937.4,386L938.3,393L939.4,400L940.8,407L942.0,414L943.1,421L943.9,428L944.3,435L944.2,442L943.8,449L943.1,456L942.3,463L941.5,470L941.0,477L940.9,484L941.1,491L941.8,498L942.8,505L944.0,512L945.3,519L946.6,526L947.6,533L948.2,540L948.4,547L948.3,554L947.8,561L947.1,568L946.4,575L945.8,582L945.4,589L945.3,596L945.7,603L946.4,610L947.4,617L948.6,624L949.8,631L950.8,638L951.6,645L952.1,652L952.2,659L952.0,666L951.5,673L950.8,680L950.1,687L949.6,694L949.4,701L949.4,708L949.8,715L950.5,722L951.4,729L952.5,736L953.5,743L954.3,750L954.9,757L955.2,764L955.2,771L954.9,778L954.4,785L953.8,792L953.2,799L952.8,806L952.6,813L952.7,820L953.1,827L953.8,834M954.8,386L956.2,393L957.4,400L958.4,407L959.1,414L959.4,421L959.2,428L958.6,435L957.8,442L957.0,449L956.2,456L955.7,463L955.6,470L955.9,477L956.6,484L957.6,491L958.9,498L960.1,505L961.3,512L962.1,519L962.6,526L962.7,533L962.3,540L961.7,547L960.9,554L960.1,561L959.4,568L959.0,575L959.0,582L959.4,589L960.1,596L961.1,603L962.2,610L963.3,617L964.2,624L964.8,631L965.1,638L965.0,645L964.5,652L963.9,659L963.1,666L962.4,673L961.8,680L961.5,687L961.6,694L962.0,701L962.7,708L963.6,715L964.5,722L965.5,729L966.2,736L966.7,743L966.8,750L966.6,757L966.1,764L965.4,771L964.7,778L964.1,785L963.6,792L963.4,799L963.4,806L963.8,813L964.3,820L965.1,827L965.9,834M972.7,386L973.6,393L974.2,400L974.3,407L974.0,414L973.4,421L972.6,428L971.7,435L971.0,442L970.6,449L970.5,456L970.9,463L971.6,470L972.7,477L973.8,484L975.0,491L976.0,498L976.7,505L977.0,512L976.9,519L976.4,526L975.7,533L974.8,540L973.9,547L973.3,554L972.9,561L972.9,568L973.3,575L974.0,582L974.9,589L975.9,596L976.9,603L977.7,610L978.1,617L978.2,624L977.9,631L977.2,638L976.4,645L975.5,652L974.8,659L974.2,666L973.9,673L973.9,680L974.3,687L975.0,694L975.8,701L976.7,708L977.5,715L978.0,722L978.3,729L978.3,736L977.9,743L977.3,750L976.5,757L975.7,764L975.0,771L974.5,778L974.3,785L974.4,792L974.7,799L975.1,806L975.7,813L976.3,820L976.8,827L977.3,834M988.8,386L988.9,393L988.6,400L987.9,407L987.1,414L986.3,421L985.7,428L985.4,435L985.4,442L985.8,449L986.5,456L987.5,463L988.7,470L989.8,477L990.6,484L991.1,491L991.2,498L990.9,505L990.4,512L989.5,519L988.6,526L987.8,533L987.1,540L986.7,547L986.8,554L987.1,561L987.8,568L988.7,575L989.6,582L990.4,589L991.0,596L991.3,603L991.2,610L990.7,617L989.9,624L989.0,631L988.0,638L987.1,645L986.5,652L986.2,659L986.3,666L986.6,673L987.2,680L987.9,687L988.7,694L989.3,701L989.7,708L989.8,715L989.6,722L989.1,729L988.4,736L987.5,743L986.7,750L986.0,757L985.5,764L985.2,771L985.2,778L985.5,785L986.0,792L986.5,799L986.9,806L987.2,813L987.2,820L987.1,827L986.8,834M1002.4,386L1002.0,393L1001.2,400L1000.5,407L1000.0,414L999.8,421L999.9,428L1000.4,435L1001.1,442L1002.0,449L1003.0,456L1004.0,463L1004.7,470L1005.1,477L1005.0,484L1004.6,491L1004.0,498L1003.1,505L1002.2,512L1001.3,519L1000.7,526L1000.4,533L1000.4,540L1000.8,547L1001.4,554L1002.1,561L1002.9,568L1003.6,575L1003.9,582L1004.0,589L1003.8,596L1003.2,603L1002.4,610L1001.4,617L1000.4,624L999.5,631L998.8,638L998.4,645L998.4,652L998.7,659L999.2,666L999.7,673L1000.3,680L1000.7,687L1000.9,694L1000.9,701L1000.5,708L999.9,715L999.1,722L998.3,729L997.4,736L996.7,743L996.2,750L995.9,757L995.9,764L996.2,771L996.5,778L996.9,785L997.3,792L997.4,799L997.2,806L996.8,813L996.2,820L995.4,827L994.7,834M1014.5,386L1014.1,393L1013.7,400L1013.6,407L1013.8,414L1014.3,421L1015.1,428L1015.9,435L1016.8,442L1017.5,449L1018.0,456L1018.2,463L1018.2,470L1017.8,477L1017.1,484L1016.2,491L1015.3,498L1014.5,505L1013.9,512L1013.6,519L1013.7,526L1014.0,533L1014.4,540L1015.0,547L1015.6,554L1016.1,561L1016.3,568L1016.2,575L1015.9,582L1015.2,589L1014.3,596L1013.4,603L1012.5,610L1011.6,617L1010.9,624L1010.5,631L1010.3,638L1010.4,645L1010.7,652L1011.1,659L1011.5,666L1011.7,673L1011.7,680L1011.5,687L1011.0,694L1010.3,701L1009.5,708L1008.6,715L1007.8,722L1007.1,729L1006.6,736L1006.3,743L1006.3,750L1006.4,757L1006.6,764L1006.9,771L1007.0,778L1007.1,785L1006.9,792L1006.4,799L1005.5,806L1004.6,813L1003.6,820L1002.6,827L1001.9,834M1026.4,386L1026.6,393L1026.8,400L1027.3,407L1028.0,414L1028.8,421L1029.6,428L1030.1,435L1030.5,442L1030.5,449L1030.4,456L1029.9,463L1029.3,470L1028.6,477L1027.8,484L1027.0,491L1026.5,498L1026.2,505L1026.2,512L1026.4,519L1026.8,526L1027.2,533L1027.6,540L1027.8,547L1027.9,554L1027.6,561L1027.2,568L1026.5,575L1025.7,582L1024.7,589L1023.8,596L1023.1,603L1022.5,610L1022.1,617L1021.8,624L1021.8,631L1021.8,638L1021.9,645L1022.0,652L1022.0,659L1021.8,666L1021.5,673L1020.9,680L1020.1,687L1019.3,694L1018.4,701L1017.6,708L1016.9,715L1016.4,722L1016.1,729L1016.0,736L1016.1,743L1016.2,750L1016.3,757L1016.2,764L1016.1,771L1015.8,778L1015.2,785L1014.5,792L1013.6,799L1012.4,806L1011.3,813L1010.3,820L1009.5,827L1009.2,834M1038.5,386L1039.2,393L1039.8,400L1040.4,407L1041.0,414L1041.5,421L1041.9,428L1041.8,435L1041.6,442L1041.1,449L1040.5,456L1039.9,463L1039.3,470L1038.8,477L1038.3,484L1038.0,491L1037.9,498L1038.0,505L1038.2,512L1038.5,519L1038.6,526L1038.7,533L1038.5,540L1038.2,547L1037.6,554L1037.0,561L1036.2,568L1035.3,575L1034.5,582L1033.8,589L1033.2,596L1032.9,603L1032.7,610L1032.5,617L1032.3,624L1032.2,631L1032.0,638L1031.7,645L1031.2,652L1030.7,659L1030.1,666L1029.3,673L1028.4,680L1027.6,687L1026.8,694L1026.1,701L1025.6,708L1025.3,715L1025.1,722L1025.0,729L1025.0,736L1024.9,743L1024.8,750L1024.5,757L1024.0,764L1023.4,771L1022.6,778L1021.7,785L1020.9,792L1019.9,799L1018.7,806L1017.8,813L1017.1,820L1016.5,827L1016.4,834M1049.9,386L1050.7,393L1051.1,400L1051.5,407L1051.7,414L1051.7,421L1051.6,428L1051.2,435L1050.6,442L1050.0,449L1049.5,456L1049.1,463L1048.8,470L1048.7,477L1048.6,484L1048.5,491L1048.5,498L1048.6,505L1048.6,512L1048.4,519L1048.2,526L1047.7,533L1047.1,540L1046.4,547L1045.7,554L1044.9,561L1044.2,568L1043.6,575L1043.0,582L1042.6,589L1042.3,596L1042.1,603L1041.9,610L1041.6,617L1041.2,624L1040.7,631L1040.0,638L1039.3,645L1038.4,652L1037.7,659L1036.8,666L1036.0,673L1035.3,680L1034.6,687L1034.1,694L1033.7,701L1033.4,708L1033.1,715L1032.9,722L1032.7,729L1032.4,736L1032.0,743L1031.5,750L1030.8,757L1030.0,764L1029.1,771L1028.3,778L1027.4,785L1026.6,792L1025.8,799L1024.8,806L1024.1,813L1023.5,820L1022.9,827L1022.8,834M1059.4,386L1059.9,393L1060.0,400L1060.0,407L1059.9,414L1059.7,421L1059.4,428L1059.0,435L1058.5,442L1058.1,449L1057.9,456L1057.7,463L1057.7,470L1057.7,477L1057.6,484L1057.4,491L1057.2,498L1056.9,505L1056.5,512L1056.1,519L1055.5,526L1054.8,533L1054.1,540L1053.4,547L1052.7,554L1052.1,561L1051.6,568L1051.2,575L1050.9,582L1050.5,589L1050.2,596L1049.8,603L1049.4,610L1048.7,617L1048.0,624L1047.1,631L1046.2,638L1045.2,645L1044.3,652L1043.5,659L1042.8,666L1042.2,673L1041.6,680L1041.1,687L1040.7,694L1040.3,701L1040.0,708L1039.6,715L1039.1,722L1038.6,729L1038.0,736L1037.4,743L1036.6,750L1035.8,757L1034.9,764L1034.1,771L1033.3,778L1032.6,785L1031.9,792L1031.2,799L1030.3,806L1029.5,813L1028.8,820L1028.1,827L1027.8,834M1066.4,386L1066.8,393L1066.7,400L1066.5,407L1066.3,414L1066.1,421L1066.0,428L1065.7,435L1065.4,442L1065.2,449L1065.1,456L1065.0,463L1064.9,470L1064.8,477L1064.5,484L1064.1,491L1063.6,498L1063.1,505L1062.5,512L1061.9,519L1061.2,526L1060.6,533L1060.0,540L1059.4,547L1058.9,554L1058.4,561L1058.0,568L1057.6,575L1057.2,582L1056.7,589L1056.1,596L1055.5,603L1054.9,610L1054.0,617L1053.0,624L1052.1,631L1051.1,638L1050.1,645L1049.3,652L1048.6,659L1048.0,666L1047.5,673L1046.9,680L1046.4,687L1045.9,694L1045.4,701L1044.9,708L1044.3,715L1043.6,722L1042.9,729L1042.2,736L1041.5,743L1040.7,750L1039.9,757L1039.1,764L1038.4,771L1037.7,778L1037.0,785L1036.4,792L1035.7,799L1034.5,806L1033.7,813L1032.8,820L1031.8,827L1031.4,834M1071.3,386L1071.7,393L1071.6,400L1071.4,407L1071.3,414L1071.3,421L1071.2,428L1071.0,435L1070.8,442L1070.6,449L1070.4,456L1070.2,463L1069.9,470L1069.7,477L1069.2,484L1068.7,491L1068.1,498L1067.5,505L1066.9,512L1066.3,519L1065.8,526L1065.2,533L1064.6,540L1064.1,547L1063.6,554L1063.1,561L1062.6,568L1062.1,575L1061.5,582L1060.9,589L1060.2,596L1059.5,603L1058.7,610L1057.8,617L1056.8,624L1055.9,631L1054.9,638L1054.0,645L1053.3,652L1052.6,659L1052.0,666L1051.4,673L1050.8,680L1050.2,687L1049.5,694L1048.9,701L1048.2,708L1047.5,715L1046.8,722L1046.1,729L1045.3,736L1044.6,743L1043.9,750L1043.2,757L1042.4,764L1041.7,771L1041.0,778L1040.3,785L1039.6,792L1038.7,799L1037.5,806L1036.4,813L1035.4,820L1034.4,827L1033.9,834M1074.5,386L1074.9,393L1074.8,400L1074.8,407L1074.7,414L1074.7,421L1074.6,428L1074.4,435L1074.1,442L1073.8,449L1073.6,456L1073.3,463L1073.0,470L1072.6,477L1072.1,484L1071.6,491L1071.0,498L1070.4,505L1069.9,512L1069.3,519L1068.8,526L1068.2,533L1067.7,540L1067.1,547L1066.5,554L1066.0,561L1065.4,568L1064.8,575L1064.1,582L1063.4,589L1062.7,596L1061.9,603L1061.2,610L1060.3,617L1059.3,624L1058.4,631L1057.5,638L1056.6,645L1055.8,652L1055.1,659L1054.4,666L1053.8,673L1053.1,680L1052.4,687L1051.7,694L1051.0,701L1050.3,708L1049.6,715L1048.9,722L1048.2,729L1047.5,736L1046.8,743L1046.1,750L1045.3,757L1044.5,764L1043.8,771L1043.0,778L1042.2,785L1041.4,792L1040.5,799L1039.2,806L1038.1,813L1037.1,820L1036.0,827L1035.6,834M1075.9,386L1076.3,393L1076.2,400L1076.2,407L1076.1,414L1076.0,421L1076.0,428L1075.7,435L1075.4,442L1075.1,449L1074.8,456L1074.5,463L1074.2,470L1073.8,477L1073.3,484L1072.8,491L1072.2,498L1071.7,505L1071.1,512L1070.6,519L1070.0,526L1069.4,533L1068.8,540L1068.2,547L1067.6,554L1067.0,561L1066.4,568L1065.8,575L1065.2,582L1064.4,589L1063.7,596L1063.0,603L1062.3,610L1061.3,617L1060.4,624L1059.5,631L1058.5,638L1057.6,645L1056.8,652L1056.1,659L1055.4,666L1054.7,673L1053.9,680L1053.2,687L1052.5,694L1051.8,701L1051.1,708L1050.4,715L1049.7,722L1049.0,729L1048.3,736L1047.7,743L1046.9,750L1046.1,757L1045.3,764L1044.5,771L1043.7,778L1042.9,785L1042.2,792L1041.2,799L1039.9,806L1038.8,813L1037.8,820L1036.7,827L1036.3,834M1075.2,386L1075.6,393L1075.5,400L1075.5,407L1075.5,414L1075.4,421L1075.4,428L1075.1,435L1074.8,442L1074.5,449L1074.1,456L1073.8,463L1073.5,470L1073.2,477L1072.7,484L1072.1,491L1071.6,498L1071.1,505L1070.5,512L1070.0,519L1069.5,526L1068.9,533L1068.3,540L1067.7,547L1067.1,554L1066.5,561L1065.9,568L1065.3,575L1064.6,582L1063.9,589L1063.2,596L1062.5,603L1061.7,610L1060.8,617L1059.9,624L1059.0,631L1058.1,638L1057.2,645L1056.3,652L1055.6,659L1054.9,666L1054.2,673L1053.5,680L1052.8,687L1052.1,694L1051.4,701L1050.7,708L1050.0,715L1049.3,722L1048.6,729L1047.9,736L1047.2,743L1046.5,750L1045.7,757L1045.0,764L1044.2,771L1043.4,778L1042.6,785L1041.8,792L1040.8,799L1039.5,806L1038.5,813L1037.4,820L1036.4,827L1035.9,834" stroke="#FF9A55" stroke-opacity="0.10" stroke-width="3" fill="none" transform="translate(3.2,0)"/>
<linearGradient id="cg" x1="0" x2="1" y1="0" y2="0"><stop offset="0" stop-color="#7A2000" stop-opacity="0.22"/><stop offset="0.12" stop-color="#7A2000" stop-opacity="0.04"/><stop offset="0.5" stop-color="#fff" stop-opacity="0.0"/><stop offset="0.88" stop-color="#7A2000" stop-opacity="0.04"/><stop offset="1" stop-color="#7A2000" stop-opacity="0.22"/></linearGradient>
<rect x="830" y="380" width="248.6" height="450" fill="url(#cg)"/>
<path d="M852.2,685.31A102.1,13.10 0 0 0 1056.4,685.31M852.4,687.62A101.9,13.20 0 0 0 1056.2,687.62M852.6,689.92A101.7,13.29 0 0 0 1056.0,689.92M852.9,692.22A101.4,13.39 0 0 0 1055.7,692.22M853.1,694.52A101.2,13.49 0 0 0 1055.5,694.52M853.3,696.82A101.0,13.58 0 0 0 1055.3,696.82M853.6,699.12A100.7,13.68 0 0 0 1055.0,699.12M853.8,701.42A100.5,13.77 0 0 0 1054.8,701.42M854.0,703.72A100.3,13.87 0 0 0 1054.6,703.72M854.2,706.02A100.1,13.96 0 0 0 1054.4,706.02M854.5,708.32A99.8,14.05 0 0 0 1054.1,708.32M854.7,710.62A99.6,14.15 0 0 0 1053.9,710.62M854.9,712.92A99.4,14.24 0 0 0 1053.7,712.92M855.2,715.22A99.1,14.33 0 0 0 1053.4,715.22M855.4,717.52A98.9,14.42 0 0 0 1053.2,717.52M855.6,719.82A98.7,14.51 0 0 0 1053.0,719.82M855.9,722.12A98.4,14.60 0 0 0 1052.7,722.12M856.1,724.42A98.2,14.69 0 0 0 1052.5,724.42M856.3,726.72A98.0,14.78 0 0 0 1052.3,726.72M856.5,729.02A97.8,14.87 0 0 0 1052.1,729.02M856.8,731.32A97.5,14.95 0 0 0 1051.8,731.32M857.0,733.62A97.3,15.04 0 0 0 1051.6,733.62M857.2,735.92A97.1,15.13 0 0 0 1051.4,735.92M857.5,738.22A96.8,15.21 0 0 0 1051.1,738.22M857.7,740.52A96.6,15.30 0 0 0 1050.9,740.52M857.9,742.82A96.4,15.38 0 0 0 1050.7,742.82M858.1,745.12A96.2,15.47 0 0 0 1050.5,745.12M858.4,747.42A95.9,15.55 0 0 0 1050.2,747.42M858.6,749.72A95.7,15.63 0 0 0 1050.0,749.72M858.9,752.02A95.4,15.70 0 0 0 1049.7,752.02M859.2,754.32A95.1,15.78 0 0 0 1049.4,754.32M859.4,756.62A94.9,15.86 0 0 0 1049.2,756.62M859.7,758.92A94.6,15.93 0 0 0 1048.9,758.92M859.9,761.22A94.4,16.01 0 0 0 1048.7,761.22M860.2,763.52A94.1,16.08 0 0 0 1048.4,763.52M860.5,765.82A93.8,16.15 0 0 0 1048.1,765.82M860.7,768.12A93.6,16.22 0 0 0 1047.9,768.12M861.0,770.42A93.3,16.30 0 0 0 1047.6,770.42M861.2,772.72A93.1,16.37 0 0 0 1047.4,772.72M861.5,775.02A92.8,16.44 0 0 0 1047.1,775.02M861.8,777.32A92.5,16.51 0 0 0 1046.8,777.32M862.0,779.62A92.3,16.58 0 0 0 1046.6,779.62M862.3,781.92A92.0,16.64 0 0 0 1046.3,781.92M862.5,784.22A91.8,16.71 0 0 0 1046.1,784.22M862.8,786.52A91.5,16.78 0 0 0 1045.8,786.52M863.1,788.82A91.2,16.85 0 0 0 1045.5,788.82M863.3,791.12A91.0,16.91 0 0 0 1045.3,791.12M863.6,793.42A90.7,16.98 0 0 0 1045.0,793.42M863.9,795.72A90.4,17.04 0 0 0 1044.7,795.72M864.2,798.02A90.1,17.09 0 0 0 1044.4,798.02M864.6,800.32A89.7,17.12 0 0 0 1044.0,800.32M865.1,802.62A89.2,17.15 0 0 0 1043.5,802.62M865.5,804.92A88.8,17.18 0 0 0 1043.1,804.92M865.9,807.22A88.4,17.21 0 0 0 1042.7,807.22M866.2,809.52A88.1,17.26 0 0 0 1042.4,809.52M866.6,811.82A87.7,17.30 0 0 0 1042.0,811.82M866.9,814.12A87.4,17.34 0 0 0 1041.7,814.12M867.3,816.42A87.0,17.38 0 0 0 1041.3,816.42M867.6,818.72A86.7,17.42 0 0 0 1041.0,818.72M868.0,821.02A86.3,17.46 0 0 0 1040.6,821.02M868.3,823.32A86.0,17.50 0 0 0 1040.3,823.32M868.6,825.62A85.7,17.54 0 0 0 1040.0,825.62M869.0,827.92A85.3,17.57 0 0 0 1039.6,827.92M869.3,830.22A85.0,17.61 0 0 0 1039.3,830.22M869.3,832.52A85.0,17.72 0 0 0 1039.3,832.52M869.3,834.82A85.0,17.83 0 0 0 1039.3,834.82" stroke="#4A1200" stroke-opacity="0.66" stroke-width="0.80" fill="none"/>
<path d="M850.3,666.59A104.0,12.28 0 0 0 1058.3,666.59M850.5,668.96A103.8,12.38 0 0 0 1058.1,668.96M850.8,671.32A103.5,12.49 0 0 0 1057.8,671.32M851.0,673.67A103.3,12.59 0 0 0 1057.6,673.67M851.2,676.01A103.1,12.70 0 0 0 1057.4,676.01M851.5,678.34A102.8,12.80 0 0 0 1057.1,678.34M851.7,680.67A102.6,12.90 0 0 0 1056.9,680.67M851.9,683.00A102.4,13.00 0 0 0 1056.7,683.00" stroke="#4A1200" stroke-opacity="0.66" stroke-width="0.82" fill="none"/>
<path d="M848.6,649.84A105.7,11.51 0 0 0 1060.0,649.84M848.8,652.26A105.5,11.63 0 0 0 1059.8,652.26M849.1,654.67A105.2,11.74 0 0 0 1059.5,654.67M849.3,657.07A105.0,11.85 0 0 0 1059.3,657.07M849.6,659.46A104.7,11.96 0 0 0 1059.0,659.46M849.8,661.84A104.5,12.07 0 0 0 1058.8,661.84M850.0,664.22A104.3,12.17 0 0 0 1058.6,664.22" stroke="#4A1200" stroke-opacity="0.66" stroke-width="0.84" fill="none"/>
<path d="M846.3,632.74A108.0,10.75 0 0 0 1062.3,632.74M846.7,635.20A107.6,10.86 0 0 0 1061.9,635.20M847.0,637.66A107.3,10.98 0 0 0 1061.6,637.66M847.3,640.11A107.0,11.08 0 0 0 1061.3,640.11M847.6,642.56A106.7,11.19 0 0 0 1061.0,642.56M848.0,644.99A106.3,11.30 0 0 0 1060.6,644.99M848.3,647.42A106.0,11.41 0 0 0 1060.3,647.42" stroke="#4A1200" stroke-opacity="0.66" stroke-width="0.86" fill="none"/>
<path d="M844.0,615.27A110.3,9.93 0 0 0 1064.6,615.27M844.3,617.79A110.0,10.06 0 0 0 1064.3,617.79M844.7,620.30A109.6,10.17 0 0 0 1063.9,620.30M845.0,622.80A109.3,10.29 0 0 0 1063.6,622.80M845.3,625.30A109.0,10.41 0 0 0 1063.3,625.30M845.7,627.78A108.6,10.53 0 0 0 1062.9,627.78M846.0,630.26A108.3,10.64 0 0 0 1062.6,630.26" stroke="#4A1200" stroke-opacity="0.66" stroke-width="0.88" fill="none"/>
<path d="M842.0,597.43A112.3,9.02 0 0 0 1066.6,597.43M842.3,600.00A112.0,9.16 0 0 0 1066.3,600.00M842.5,602.56A111.8,9.29 0 0 0 1066.1,602.56M842.8,605.12A111.5,9.43 0 0 0 1065.8,605.12M843.1,607.67A111.2,9.56 0 0 0 1065.5,607.67M843.3,610.21A111.0,9.69 0 0 0 1065.3,610.21M843.7,612.74A110.6,9.81 0 0 0 1064.9,612.74" stroke="#4A1200" stroke-opacity="0.66" stroke-width="0.90" fill="none"/>
<path d="M840.1,579.21A114.2,8.04 0 0 0 1068.5,579.21M840.4,581.83A113.9,8.18 0 0 0 1068.2,581.83M840.7,584.45A113.6,8.33 0 0 0 1067.9,584.45M840.9,587.06A113.4,8.47 0 0 0 1067.7,587.06M841.2,589.67A113.1,8.61 0 0 0 1067.4,589.67M841.5,592.26A112.8,8.75 0 0 0 1067.1,592.26M841.7,594.85A112.6,8.89 0 0 0 1066.9,594.85" stroke="#4A1200" stroke-opacity="0.66" stroke-width="0.92" fill="none"/>
<path d="M838.7,563.28A115.6,7.14 0 0 0 1069.9,563.28M839.0,565.96A115.3,7.29 0 0 0 1069.6,565.96M839.2,568.62A115.1,7.44 0 0 0 1069.4,568.62M839.4,571.28A114.9,7.59 0 0 0 1069.2,571.28M839.6,573.93A114.7,7.74 0 0 0 1069.0,573.93M839.9,576.57A114.4,7.89 0 0 0 1068.7,576.57" stroke="#4A1200" stroke-opacity="0.66" stroke-width="0.94" fill="none"/>
<path d="M837.1,544.34A117.2,6.03 0 0 0 1071.5,544.34M837.3,547.07A117.0,6.19 0 0 0 1071.3,547.07M837.6,549.79A116.7,6.35 0 0 0 1071.0,549.79M837.8,552.51A116.5,6.51 0 0 0 1070.8,552.51M838.0,555.21A116.3,6.67 0 0 0 1070.6,555.21M838.3,557.91A116.0,6.82 0 0 0 1070.3,557.91M838.5,560.60A115.8,6.98 0 0 0 1070.1,560.60" stroke="#4A1200" stroke-opacity="0.66" stroke-width="0.96" fill="none"/>
<path d="M835.7,527.78A118.6,5.03 0 0 0 1072.9,527.78M835.9,530.56A118.4,5.20 0 0 0 1072.7,530.56M836.2,533.33A118.1,5.36 0 0 0 1072.4,533.33M836.4,536.09A117.9,5.53 0 0 0 1072.2,536.09M836.6,538.85A117.7,5.70 0 0 0 1072.0,538.85M836.9,541.60A117.4,5.86 0 0 0 1071.7,541.60" stroke="#4A1200" stroke-opacity="0.66" stroke-width="0.98" fill="none"/>
<path d="M834.4,510.92A119.9,3.98 0 0 0 1074.2,510.92M834.6,513.75A119.7,4.16 0 0 0 1074.0,513.75M834.8,516.57A119.5,4.34 0 0 0 1073.8,516.57M835.0,519.39A119.3,4.51 0 0 0 1073.6,519.39M835.3,522.19A119.0,4.68 0 0 0 1073.3,522.19M835.5,524.99A118.8,4.86 0 0 0 1073.1,524.99" stroke="#4A1200" stroke-opacity="0.66" stroke-width="1.00" fill="none"/>
<path d="M833.0,493.75A121.3,2.89 0 0 0 1075.6,493.75M833.2,496.63A121.1,3.08 0 0 0 1075.4,496.63M833.5,499.51A120.8,3.26 0 0 0 1075.1,499.51M833.7,502.37A120.6,3.44 0 0 0 1074.9,502.37M833.9,505.23A120.4,3.62 0 0 0 1074.7,505.23M834.1,508.08A120.2,3.80 0 0 0 1074.5,508.08" stroke="#4A1200" stroke-opacity="0.66" stroke-width="1.02" fill="none"/>
<path d="M831.7,476.27A122.6,1.76 0 0 0 1076.9,476.27M831.9,479.21A122.4,1.95 0 0 0 1076.7,479.21M832.1,482.13A122.2,2.14 0 0 0 1076.5,482.13M832.3,485.05A122.0,2.33 0 0 0 1076.3,485.05M832.5,487.96A121.8,2.52 0 0 0 1076.1,487.96M832.8,490.86A121.5,2.71 0 0 0 1075.8,490.86" stroke="#4A1200" stroke-opacity="0.66" stroke-width="1.04" fill="none"/>
<path d="M830.9,458.47A123.4,0.57 0 0 0 1077.7,458.47M831.0,461.46A123.3,0.77 0 0 0 1077.6,461.46M831.2,464.44A123.1,0.97 0 0 0 1077.4,464.44M831.3,467.41A123.0,1.17 0 0 0 1077.3,467.41M831.4,470.37A122.9,1.36 0 0 0 1077.2,470.37M831.6,473.33A122.7,1.56 0 0 0 1077.0,473.33" stroke="#4A1200" stroke-opacity="0.66" stroke-width="1.06" fill="none"/>
<path d="M830.2,443.39A124.1,0.45 0 0 1 1078.4,443.39M830.4,446.43A123.9,0.24 0 0 1 1078.2,446.43M830.5,449.45H1078.1M830.6,452.47A123.7,0.17 0 0 0 1078.0,452.47M830.8,455.48A123.5,0.37 0 0 0 1077.8,455.48" stroke="#4A1200" stroke-opacity="0.66" stroke-width="1.08" fill="none"/>
<path d="M829.6,425.00A124.7,1.70 0 0 1 1079.0,425.00M829.6,428.09A124.7,1.49 0 0 1 1079.0,428.09M829.7,431.17A124.6,1.28 0 0 1 1078.9,431.17M829.8,434.24A124.5,1.07 0 0 1 1078.8,434.24M830.0,437.30A124.3,0.86 0 0 1 1078.6,437.30M830.1,440.35A124.2,0.65 0 0 1 1078.5,440.35" stroke="#4A1200" stroke-opacity="0.66" stroke-width="1.10" fill="none"/>
<path d="M829.4,409.41A124.9,2.76 0 0 1 1079.2,409.41M829.5,412.55A124.8,2.55 0 0 1 1079.1,412.55M829.5,415.68A124.8,2.33 0 0 1 1079.1,415.68M829.5,418.79A124.8,2.12 0 0 1 1079.1,418.79M829.5,421.90A124.8,1.91 0 0 1 1079.1,421.90" stroke="#4A1200" stroke-opacity="0.66" stroke-width="1.12" fill="none"/>
<path d="M829.4,390.40A124.9,4.06 0 0 1 1079.2,390.40M829.3,393.59A125.0,3.84 0 0 1 1079.3,393.59M829.3,396.78A125.0,3.62 0 0 1 1079.3,396.78M829.4,399.95A124.9,3.41 0 0 1 1079.2,399.95M829.4,403.11A124.9,3.19 0 0 1 1079.2,403.11M829.4,406.27A124.9,2.98 0 0 1 1079.2,406.27" stroke="#4A1200" stroke-opacity="0.66" stroke-width="1.14" fill="none"/>
<path d="M829.7,384.00A124.6,4.48 0 0 1 1078.9,384.00M829.6,387.20A124.7,4.27 0 0 1 1079.0,387.20" stroke="#4A1200" stroke-opacity="0.66" stroke-width="1.16" fill="none"/>
</g>
<path d="M917.5,387.8L990,387.8L990,391.7L917.5,391.7Z" fill="#E2541A"/>
<rect x="953" y="420" width="2.4" height="161" fill="#6E4BD0"/>
<rect x="945" y="401" width="19" height="20" fill="#3F3CFF"/>
<rect x="964" y="598.8" width="100" height="2.6" fill="#8E8B2F"/>
<rect x="1063" y="598.9" width="71" height="2.4" fill="#2F9A4E"/>
<rect x="945" y="590" width="19.2" height="20" fill="#fff"/>
<rect x="946" y="580" width="17.2" height="18.2" fill="#D10B0B"/>
<rect x="1133.3" y="590" width="19.7" height="20" rx="1.5" fill="#24A04B"/>
<path d="M1320,857.5L1331.5,870" stroke="#C8141A" stroke-width="3.6"/>
<rect x="1268" y="869.8" width="65" height="3.8" fill="#2B9E47"/>
<rect x="1331.1" y="806.8" width="3.7" height="65.6" fill="#3B3BE6"/>
</svg>
<div class="abs" style="left:0;top:0;width:1920px;height:99px;background:#08073F"></div>
<div class="abs" style="left:0;top:0;width:1920px;height:2px;background:#fff"></div>
<svg style="left:45px;top:23px" width="32" height="22" viewBox="0 0 32 22"><g fill="#fff">
<rect x="0.7" y="14.0" width="6.3" height="6.9" rx="1.5"/>
<rect x="6.5" y="0.1" width="6.4" height="14.6" rx="1.7"/>
<rect x="12.7" y="14.0" width="5.9" height="6.9" rx="1.5"/>
<rect x="18.4" y="0.1" width="6.4" height="14.6" rx="1.7"/>
<rect x="24.5" y="14.0" width="6.2" height="6.9" rx="1.5"/>
</g></svg>
<div class="t" style="left:82.80px;top:23px;font-size:22px;line-height:25px;color:#fff;transform:scaleX(1.0917);">UltiMaker Cura</div>
<div class="t" style="left:779.60px;top:25px;font-size:17px;line-height:19px;color:#fff;transform:scaleX(0.8277);">PREPARE</div>
<div class="abs" style="left:888px;top:18px;width:133.5px;height:32px;background:#fff;border-radius:3px"></div>
<div class="t" style="left:921.60px;top:25px;font-size:17px;line-height:19px;color:#08073F;transform:scaleX(0.8621);">PREVIEW</div>
<div class="t" style="left:1063.50px;top:25px;font-size:17px;line-height:19px;color:#fff;transform:scaleX(0.9514);">MONITOR</div>
<div class="abs" style="left:1695px;top:18px;width:90px;height:32px;border:1px solid #DDDDE8;border-radius:3px"></div>
<div class="t" style="left:1700.80px;top:26px;font-size:15px;line-height:17px;color:#fff;transform:scaleX(0.9619);">Marketplace</div>
<svg style="left:1805px;top:22px" width="25" height="25" viewBox="0 0 25 25"><clipPath id="gc"><rect x="0" y="0" width="25" height="25" rx="4"/></clipPath><g fill="#fff" clip-path="url(#gc)"><rect x="0.0" y="0.0" width="6" height="6" rx="0.8"/><rect x="9.5" y="0.0" width="6" height="6" rx="0.8"/><rect x="19.0" y="0.0" width="6" height="6" rx="0.8"/><rect x="0.0" y="9.5" width="6" height="6" rx="0.8"/><rect x="9.5" y="9.5" width="6" height="6" rx="0.8"/><rect x="19.0" y="9.5" width="6" height="6" rx="0.8"/><rect x="0.0" y="19.0" width="6" height="6" rx="0.8"/><rect x="9.5" y="19.0" width="6" height="6" rx="0.8"/><rect x="19.0" y="19.0" width="6" height="6" rx="0.8"/></g></svg>
<div class="abs" style="left:1850px;top:18px;width:54px;height:32px;border:1px solid #DDDDE8;border-radius:3px"></div>
<div class="t" style="left:1855.60px;top:26px;font-size:15px;line-height:17px;color:#fff;transform:scaleX(0.9245);">Sign in</div>
<div class="abs" style="left:65px;top:66px;width:1787px;height:65px;background:#fff;border:1px solid #CDCDD2;border-radius:4px;box-shadow:0 1px 1px rgba(0,0,0,0.12)"></div>
<div class="abs" style="left:455px;top:67px;width:1px;height:63px;background:#D2D2D6"></div>
<div class="abs" style="left:1235px;top:67px;width:1px;height:63px;background:#D2D2D6"></div>
<div class="t" style="left:81.00px;top:89px;font-size:18px;line-height:20px;color:#8C8C94;transform:scaleX(0.9342);">View type</div>
<div class="t" style="left:172.20px;top:89px;font-size:18px;line-height:20px;color:#1A1A24;transform:scaleX(0.9096);">Layer view</div>
<div class="t" style="left:471.80px;top:89px;font-size:18px;line-height:20px;color:#8C8C94;transform:scaleX(0.9247);">Color scheme</div>
<div class="t" style="left:593.00px;top:89px;font-size:18px;line-height:20px;color:#1A1A24;transform:scaleX(0.9136);">Line Type</div>
<div class="t" style="left:1299.80px;top:89px;font-size:18px;line-height:20px;color:#1A1A24;transform:scaleX(0.9357);">Low Quality - 0.28mm</div>
<div class="t" style="left:1575.60px;top:89px;font-size:18px;line-height:20px;color:#1A1A24;transform:scaleX(0.8600);">20%</div>
<div class="t" style="left:1676.00px;top:89px;font-size:18px;line-height:20px;color:#1A1A24;transform:scaleX(0.8573);">On</div>
<div class="t" style="left:1764.00px;top:89px;font-size:18px;line-height:20px;color:#1A1A24;transform:scaleX(0.8573);">On</div>
<svg style="left:424.8px;top:93.8px" width="14.5" height="9.5"><polyline points="2,2 7.25,7.5 12.5,2" fill="none" stroke="#55555F" stroke-width="1.7" stroke-linecap="round" stroke-linejoin="round"/></svg>
<svg style="left:1204.2px;top:93.8px" width="14.5" height="9.5"><polyline points="2,2 7.25,7.5 12.5,2" fill="none" stroke="#55555F" stroke-width="1.7" stroke-linecap="round" stroke-linejoin="round"/></svg>
<svg style="left:1820.8px;top:93.5px" width="14.5" height="9.5"><polyline points="2,2 7.25,7.5 12.5,2" fill="none" stroke="#8E8E96" stroke-width="1.6" stroke-linecap="round" stroke-linejoin="round"/></svg>
<div class="abs" style="left:-2px;top:255px;width:67px;height:520.6px;background:#fff;border:1px solid #CACACE;border-top:2px solid #D2D2D4;border-bottom:2px solid #D2D2D4;border-radius:0 4px 4px 0"></div>
<div class="abs" style="left:5.8px;top:326px;width:54px;height:54px;border-radius:50%;background:#E8F0FA"></div>
<svg style="left:0;top:0" width="700" height="976" viewBox="0 0 700 976"><g fill="none" stroke="#08073F" stroke-width="2.6" stroke-linejoin="miter">
<path d="M32.8,278V298M22.8,288H42.8"/><path d="M28.7,281.3L32.8,277.2L36.9,281.3M28.7,294.7L32.8,298.8L36.9,294.7M26.3,283.9L22.2,288L26.3,292.1M39.3,283.9L43.4,288L39.3,292.1" stroke-width="3"/>
<path d="M21.7,351.5V344.6a2.5,2.5 0 0 1 2.5,-2.5H41.3a2.5,2.5 0 0 1 2.5,2.5V361.2a2.5,2.5 0 0 1 -2.5,2.5H34.2"/><rect x="21.7" y="355.2" width="8.5" height="8.5" rx="0.8"/><path d="M31,354.8L39.6,346.2M32.4,346.4H39.6V353.6"/>
<path d="M22.9,413.1A11.2,11.2 0 0 1 44.0,418.4" stroke-linecap="round"/><path d="M21.9,404.4V413.6H31"/><g fill="#08073F" stroke="none"><circle cx="21.9" cy="419.9" r="1.35"/><circle cx="23.9" cy="424.6" r="1.35"/><circle cx="28" cy="428.1" r="1.35"/><circle cx="33.1" cy="429.6" r="1.35"/><circle cx="38.7" cy="427.6" r="1.35"/><circle cx="42.2" cy="423.4" r="1.35"/></g>
<path d="M20.6,477.6V489.6L27.4,483.6Z" stroke-linejoin="round" stroke-width="2.4"/><path d="M46.2,475.6V491.6L36.8,483.6Z" fill="#08073F" stroke="none"/><g fill="#08073F" stroke="none"><circle cx="32.5" cy="471.8" r="1.35"/><circle cx="32.5" cy="477.4" r="1.35"/><circle cx="32.5" cy="483.1" r="1.35"/><circle cx="32.5" cy="488.8" r="1.35"/><circle cx="32.5" cy="494.3" r="1.35"/></g>
<path d="M21.7,546V540.4a2.5,2.5 0 0 1 2.5,-2.5H29.7V546Z"/><path d="M34.6,536.6H42.6a2.5,2.5 0 0 1 2.5,2.5V547.2H34.6Z" fill="#08073F" stroke="none"/><path d="M34.2,542.6L41,535.8M36.6,547.8L45.6,538.8" stroke="#fff" stroke-width="2.1"/><path d="M20.4,549.6H31V560.1H22.9a2.5,2.5 0 0 1 -2.5,-2.5Z" fill="#08073F" stroke="none"/><path d="M35.9,550.9H43.8V556.3a2.5,2.5 0 0 1 -2.5,2.5H35.9Z"/>
<path d="M33.1,601.2L41.8,609.2L33.1,618.2L24.4,609.9Z" stroke-linejoin="round" stroke-width="2.8"/><path d="M21.6,613.6V625.2M26.5,618.6V625.2M32.2,622.6V625.2" stroke-width="2.5"/><path d="M39.6,618.8L45.4,624.6M45.4,618.8L39.6,624.6" stroke-width="2.3"/>
<g transform="rotate(-44.5 32.7 678.2)"><rect x="19.6" y="673.4" width="26.4" height="9.6" rx="2.4"/><circle cx="24.6" cy="678.4" r="1.5" fill="#08073F" stroke="none"/><path d="M33,674.4V677.6M36.2,674.4V679.2M39.4,674.4V677.6M42.4,674.4V679.2" stroke-width="1.5"/></g>
<path d="M22.2,731.2a10.65,3.6 0 0 1 21.3,0V754.6a10.65,4.1 0 0 1 -21.3,0Z" fill="#08073F" stroke="none"/><ellipse cx="32.85" cy="730.9" rx="7.4" ry="1.45" fill="#F2F2F8" stroke="none"/>
</g></svg>
<div class="abs" style="left:81px;top:320px;width:417px;height:234px;background:#fff;border:1px solid #C8C8CC"></div>
<svg style="left:66px;top:338px" width="18" height="32"><path d="M16.5,2.5L3.2,14.6L16.5,26.6" fill="#fff" stroke="#C8C8CC" stroke-width="1"/><rect x="15.6" y="3.4" width="2" height="22.4" fill="#fff"/></svg>
<div class="abs" style="left:115px;top:337.4px;width:179px;height:31.6px;background:linear-gradient(to bottom,#F3F3F3 0,#F3F3F3 30px,#C4C4C4 30px)"></div>
<div class="abs" style="left:302px;top:337.4px;width:179px;height:31.6px;background:linear-gradient(to bottom,#F3F3F3 0,#F3F3F3 30px,#C4C4C4 30px)"></div>
<div class="t" style="left:97.80px;top:346px;font-size:14px;line-height:16px;color:#C2272D;transform:scaleX(0.9203);">X</div>
<div class="t" style="left:120.60px;top:346px;font-size:14px;line-height:16px;color:#1A1A24;transform:scaleX(0.9800);">90.8457</div>
<div class="t" style="left:261.80px;top:346px;font-size:14px;line-height:16px;color:#8E8E96;transform:scaleX(1.0468);">mm</div>
<div class="t" style="left:308.60px;top:346px;font-size:14px;line-height:16px;color:#1A1A24;transform:scaleX(0.9631);">50</div>
<div class="t" style="left:462.20px;top:346px;font-size:14px;line-height:16px;color:#8E8E96;transform:scaleX(0.8347);">%</div>
<div class="abs" style="left:115px;top:378.4px;width:179px;height:31.6px;background:linear-gradient(to bottom,#F3F3F3 0,#F3F3F3 30px,#C4C4C4 30px)"></div>
<div class="abs" style="left:302px;top:378.4px;width:179px;height:31.6px;background:linear-gradient(to bottom,#F3F3F3 0,#F3F3F3 30px,#C4C4C4 30px)"></div>
<div class="t" style="left:97.60px;top:387px;font-size:14px;line-height:16px;color:#3DA35D;transform:scaleX(0.9631);">Y</div>
<div class="t" style="left:120.60px;top:387px;font-size:14px;line-height:16px;color:#1A1A24;transform:scaleX(0.9800);">90.8457</div>
<div class="t" style="left:261.80px;top:387px;font-size:14px;line-height:16px;color:#8E8E96;transform:scaleX(1.0468);">mm</div>
<div class="t" style="left:308.60px;top:387px;font-size:14px;line-height:16px;color:#1A1A24;transform:scaleX(0.9631);">50</div>
<div class="t" style="left:462.20px;top:387px;font-size:14px;line-height:16px;color:#8E8E96;transform:scaleX(0.8347);">%</div>
<div class="abs" style="left:115px;top:419.4px;width:179px;height:31.6px;background:linear-gradient(to bottom,#F3F3F3 0,#F3F3F3 30px,#C4C4C4 30px)"></div>
<div class="abs" style="left:302px;top:419.4px;width:179px;height:31.6px;background:linear-gradient(to bottom,#F3F3F3 0,#F3F3F3 30px,#A8A8A8 30px)"></div>
<div class="t" style="left:98.00px;top:428px;font-size:14px;line-height:16px;color:#4A49C8;transform:scaleX(0.9602);">Z</div>
<div class="t" style="left:120.60px;top:428px;font-size:14px;line-height:16px;color:#1A1A24;transform:scaleX(0.9765);">152.78</div>
<div class="t" style="left:261.80px;top:428px;font-size:14px;line-height:16px;color:#8E8E96;transform:scaleX(1.0468);">mm</div>
<div class="t" style="left:308.60px;top:428px;font-size:14px;line-height:16px;color:#1A1A24;transform:scaleX(0.9595);">100</div>
<div class="t" style="left:462.20px;top:428px;font-size:14px;line-height:16px;color:#8E8E96;transform:scaleX(0.8347);">%</div>
<div class="abs" style="left:195px;top:472.0px;width:21px;height:21px;background:#fff;border:1px solid #B2B2B8;border-radius:3.5px"></div>
<div class="t" style="left:224.80px;top:475px;font-size:14.5px;line-height:16px;color:#1A1A24;transform:scaleX(0.9457);">Snap Scaling</div>
<div class="abs" style="left:195px;top:508.3px;width:21px;height:21px;background:#fff;border:1px solid #B2B2B8;border-radius:3.5px"></div>
<div class="t" style="left:224.80px;top:511px;font-size:14.5px;line-height:16px;color:#1A1A24;transform:scaleX(0.9948);">Uniform Scaling</div>
<svg style="left:0;top:0" width="700" height="976"><g fill="none" stroke="#08073F" stroke-width="2.8" stroke-linecap="round" stroke-linejoin="round"><path d="M138,493.4H146.5A10,10 0 1 1 136.6,504.4"/><path d="M143.7,488.6L137.6,493.4L143.7,498.6"/></g></svg>
<svg style="left:0;top:0" width="700" height="976"><g fill="none" stroke="#6A6A6A"><path d="M83.8,837.8L89.25,832.4L94.7,837.8" stroke-width="1.5"/><path d="M90.3,875.8L98.7,867.6" stroke-width="3.8" stroke-linecap="butt"/><path d="M88.7,877.4L90.6,875.5" stroke-width="3.4" stroke-linecap="round"/><path d="M84.1,881.2H101.6" stroke-width="2"/></g>
<g fill="none" stroke="#6A6A6A" stroke-width="2.8" stroke-linejoin="round"><path d="M97.8,937.6L109,944.1V955.9L97.8,962L86.6,955.9V944.1Z M86.6,944.1L97.8,949.8L109,944.1M97.8,949.8V962"/><polygon points="126.6,945.9 141.9,945.9 141.9,960.3 126.6,960.3" fill="#6A6A6A"/><polygon points="126.6,945.9 133.4,938.9 148.7,938.9 148.7,953.3 141.9,960.3 126.6,960.3"/><path d="M126.6,945.9L141.9,945.9L148.70000000000002,938.9M141.9,945.9L141.9,960.3"/><polygon points="166.6,945.9 173.4,938.9 188.7,938.9 181.9,945.9" fill="#6A6A6A"/><polygon points="166.6,945.9 173.4,938.9 188.7,938.9 188.7,953.3 181.9,960.3 166.6,960.3"/><path d="M166.6,945.9L181.9,945.9L188.70000000000002,938.9M181.9,945.9L181.9,960.3"/><polygon points="213.2,945.9 206.4,938.9 206.4,953.3 213.2,960.3" fill="#6A6A6A"/><polygon points="228.5,945.9 221.7,938.9 206.4,938.9 206.4,953.3 213.2,960.3 228.5,960.3"/><path d="M228.50000000000003,945.9L213.20000000000002,945.9L206.4,938.9M213.20000000000002,945.9L213.20000000000002,960.3"/><polygon points="262.1,945.9 268.9,938.9 268.9,953.3 262.1,960.3" fill="#6A6A6A"/><polygon points="246.8,945.9 253.6,938.9 268.9,938.9 268.9,953.3 262.1,960.3 246.8,960.3"/><path d="M246.8,945.9L262.1,945.9L268.90000000000003,938.9M262.1,945.9L262.1,960.3"/></g></svg>
<div class="t" style="left:114.80px;top:829px;font-size:14.5px;line-height:16px;color:#5C5C5C;transform:scaleX(0.9929);">Object list</div>
<div class="t" style="left:122.90px;top:866px;font-size:14px;line-height:16px;color:#5C5C5C;transform:scaleX(0.9303);">CE3E3V2_Daktyl_2</div>
<div class="t" style="left:81.70px;top:898px;font-size:14px;line-height:16px;color:#5C5C5C;transform:scaleX(1.0000);">90.8 x 90.8 x 152.8 mm</div>
<svg style="left:1200px;top:0" width="720" height="976" viewBox="1200 0 720 976"><g fill="none" stroke="#08073F" stroke-width="2.6">
<path d="M1255.1,89.5H1270.4M1279.4,89.5H1287.2M1255.1,99H1275.6M1255.1,108.4H1262.4M1271.2,108.4H1287.2"/><circle cx="1273.8" cy="89.5" r="2.7"/><circle cx="1279.2" cy="99" r="2.7"/><circle cx="1265.9" cy="108.4" r="2.7"/><circle cx="1285.9" cy="99" r="1.35" fill="#08073F" stroke="none"/>
<rect x="1539.1" y="86.8" width="24.8" height="24.8" rx="3.6" fill="#08073F" stroke="none"/><polygon points="1551.5,89.39999999999999 1555.4,93.3 1551.5,97.2 1547.6,93.3" fill="#fff" fill-opacity="1" stroke="none"/><polygon points="1545.5,95.39999999999999 1549.4,99.3 1545.5,103.2 1541.6,99.3" fill="#fff" fill-opacity="1" stroke="none"/><polygon points="1557.5,95.39999999999999 1561.4,99.3 1557.5,103.2 1553.6,99.3" fill="#fff" fill-opacity="1" stroke="none"/><polygon points="1551.5,101.39999999999999 1555.4,105.3 1551.5,109.2 1547.6,105.3" fill="#fff" fill-opacity="1" stroke="none"/><polygon points="1545.4,89.1 1546.6000000000001,90.3 1545.4,91.5 1544.2,90.3" fill="#fff" fill-opacity="0.75" stroke="none"/><polygon points="1557.6,89.1 1558.8,90.3 1557.6,91.5 1556.3999999999999,90.3" fill="#fff" fill-opacity="0.75" stroke="none"/><polygon points="1545.4,107.1 1546.6000000000001,108.3 1545.4,109.5 1544.2,108.3" fill="#fff" fill-opacity="0.75" stroke="none"/><polygon points="1557.6,107.1 1558.8,108.3 1557.6,109.5 1556.3999999999999,108.3" fill="#fff" fill-opacity="0.75" stroke="none"/><polygon points="1542.4,92.1 1543.6000000000001,93.3 1542.4,94.5 1541.2,93.3" fill="#fff" fill-opacity="0.75" stroke="none"/><polygon points="1560.6,92.1 1561.8,93.3 1560.6,94.5 1559.3999999999999,93.3" fill="#fff" fill-opacity="0.75" stroke="none"/><polygon points="1542.4,104.1 1543.6000000000001,105.3 1542.4,106.5 1541.2,105.3" fill="#fff" fill-opacity="0.75" stroke="none"/><polygon points="1560.6,104.1 1561.8,105.3 1560.6,106.5 1559.3999999999999,105.3" fill="#fff" fill-opacity="0.75" stroke="none"/>
<path d="M1651.5,86.6L1660.6,95.2L1651.5,104.4L1642.5,95.9Z" stroke-linejoin="round" stroke-width="2.9"/><g fill="#08073F" stroke="none"><polygon points="1639,98.8 1641.6,101.6 1641.6,111.6 1639,111.6"/><polygon points="1644.6,104.6 1647.2,107 1647.2,111.6 1644.6,111.6"/><rect x="1650.2" y="108.6" width="2.6" height="3"/><polygon points="1658.4,104.6 1655.8,107 1655.8,111.6 1658.4,111.6"/><polygon points="1664,98.8 1661.4,101.6 1661.4,111.6 1664,111.6"/></g>
<path d="M1738.8,85.8V99.4M1733.3,93.9L1738.8,100.2L1744.3,93.9" stroke-width="2.7" stroke-linecap="round"/><path d="M1729.4,96.9V101.9a3,3 0 0 0 3,3H1745.4a3,3 0 0 0 3,-3V96.9" stroke-linecap="round"/><g fill="#08073F" stroke="none"><circle cx="1727.8" cy="110.3" r="1.35"/><circle cx="1733.35" cy="110.3" r="1.35"/><circle cx="1738.8" cy="110.3" r="1.35"/><circle cx="1744.4" cy="110.3" r="1.35"/><circle cx="1750" cy="110.3" r="1.35"/></g>
</g>
<rect x="1887.7" y="200" width="7.6" height="530" fill="#08073F"/><circle cx="1891.4" cy="200.9" r="12.6" fill="#08073F"/><circle cx="1891.4" cy="729" r="12.6" fill="#08073F"/>
<path d="M1871.5,155.5H1910.9V180.6H1894.6L1890.5,184.8L1886.4,180.6H1871.5Z" fill="#fff" stroke="#B9B9BC" stroke-width="1"/>
</svg>
<div class="t" style="left:1880.20px;top:160px;font-size:14px;line-height:16px;color:#1A1A24;transform:scaleX(0.9467);">546</div>
<svg style="left:0;top:0" width="1920" height="976"><rect x="595.4" y="949.7" width="528" height="7.6" rx="2" fill="#08073F"/><circle cx="1123.2" cy="953.4" r="12.5" fill="#08073F"/><path d="M560.2,945.6L573.8,953.6L560.2,961.6Z" fill="none" stroke="#08073F" stroke-width="2.2" stroke-linejoin="round"/></svg>
<div class="abs" style="left:1470px;top:798px;width:422px;height:160px;background:#fff;border:1px solid #CDCDD0;border-radius:4px;box-shadow:0 1px 0 rgba(0,0,0,0.08)"></div>
<div class="abs" style="left:1497px;top:894.2px;width:368px;height:39.6px;background:#196EF0"></div>
<div class="t" style="left:1635.60px;top:904px;font-size:17.5px;line-height:20px;color:#fff;transform:scaleX(0.9322);">Save to Disk</div>
<div class="t" style="left:1530.40px;top:825px;font-size:17px;line-height:19px;color:#14141E;font-weight:bold;transform:scaleX(0.9791);">2 hours 11 minutes</div>
<div class="t" style="left:1530.40px;top:862px;font-size:14.5px;line-height:16px;color:#1A1A24;transform:scaleX(0.9586);">52g · 17.54m</div>
<svg style="left:0;top:0" width="1920" height="976"><g fill="none" stroke="#08073F" stroke-width="2.1"><circle cx="1509.9" cy="834.3" r="8.9"/><path d="M1509.9,828.4V834.2H1514.8"/><circle cx="1509.9" cy="870.6" r="8.8"/><circle cx="1509.9" cy="870.6" r="2.1" stroke-width="1.8"/><path d="M1511.6,865.3L1513.6,866.4" stroke-width="1.7"/><path d="M1501,871V879.4L1503.6,877" stroke-width="1.9"/><circle cx="1852.4" cy="834.8" r="9.3"/><path d="M1852.4,833.6V840" stroke-width="2.3"/><circle cx="1852.4" cy="829.9" r="1.35" fill="#08073F" stroke="none"/></g><rect x="1397" y="892" width="55.7" height="37.4" fill="#fff" stroke="#196EF0" stroke-width="2"/><path d="M1414.8,900.2L1434.6,910.6L1414.8,921Z" fill="#196EF0"/></svg>
</body></html>
